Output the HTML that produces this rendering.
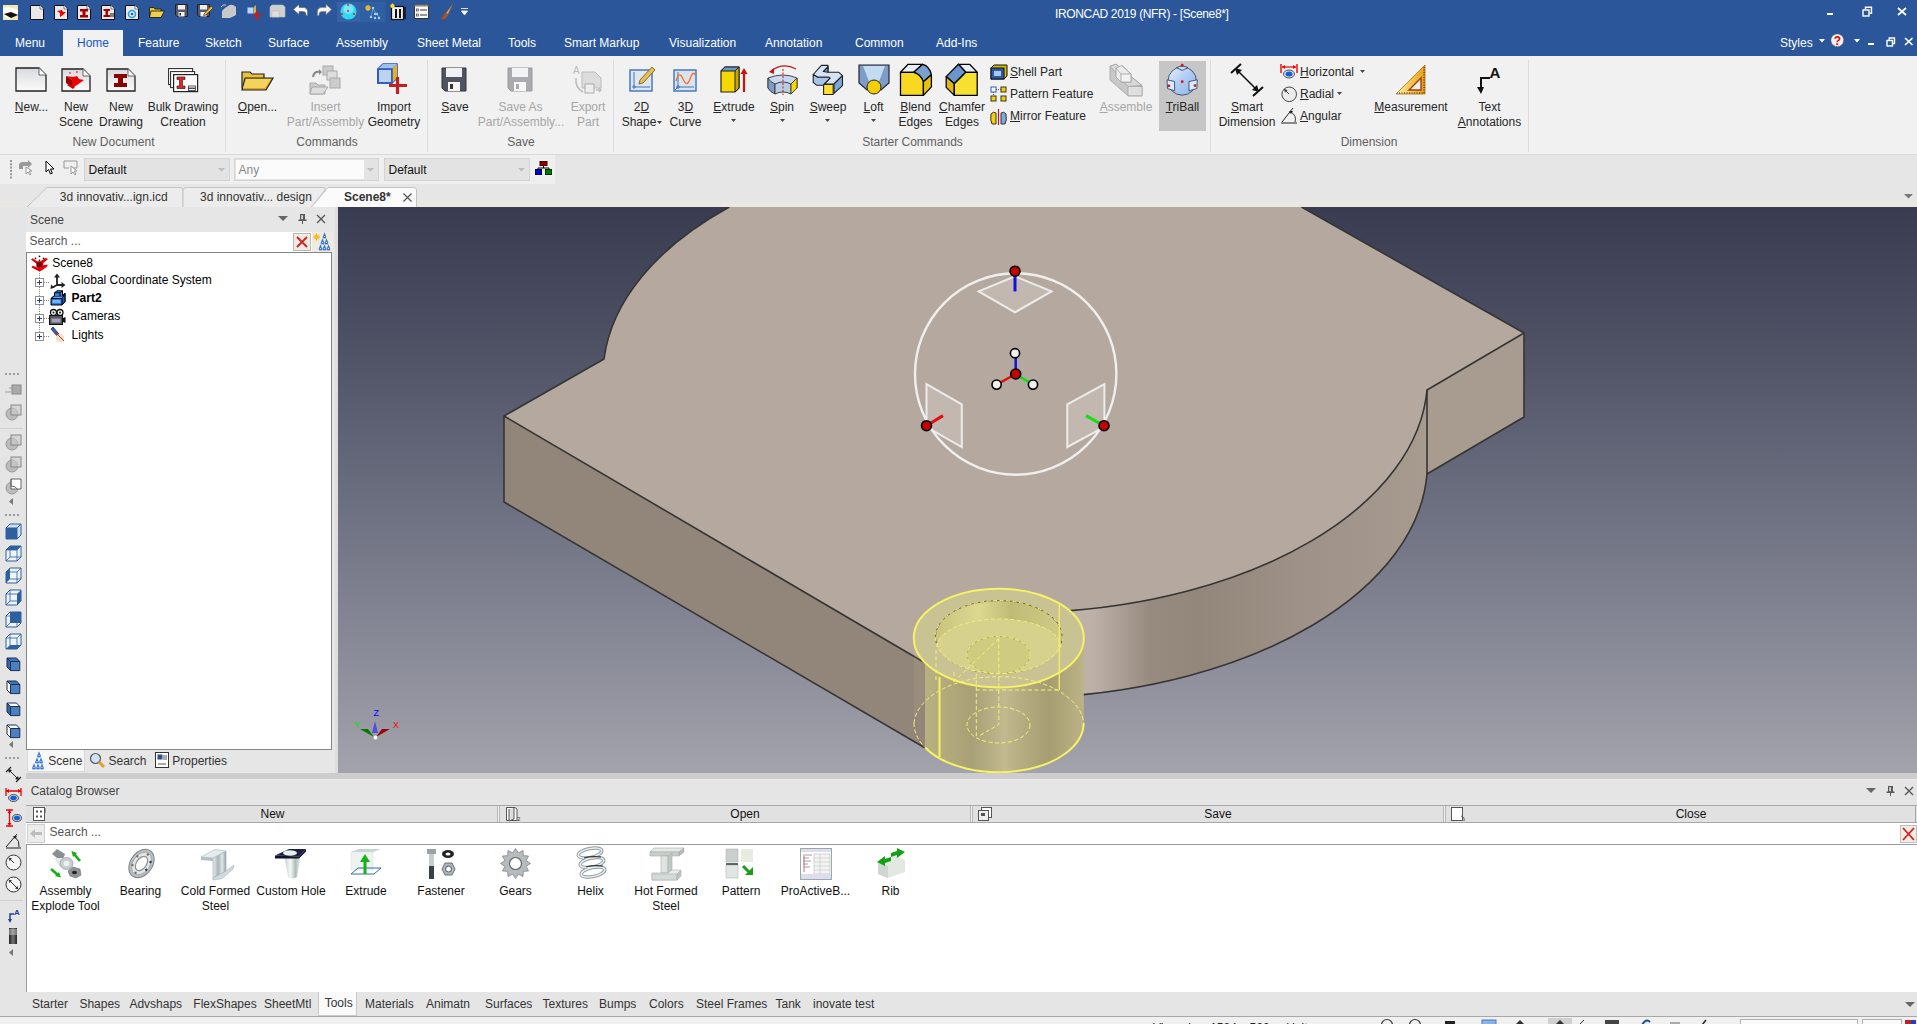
<!DOCTYPE html>
<html><head><meta charset="utf-8"><style>
html,body{margin:0;padding:0;}
body{width:1917px;height:1024px;position:relative;overflow:hidden;background:#e6e6e6;font-family:"Liberation Sans", sans-serif;}
svg{overflow:visible}
</style></head><body>
<div style="position:absolute;left:0px;top:0px;width:1917px;height:56px;background:#2b579a"></div>
<div style="position:absolute;left:1055px;top:7.84px;font-size:12px;line-height:12px;color:#ffffff;font-weight:normal;white-space:nowrap;letter-spacing:-0.35px">IRONCAD 2019 (NFR) - [Scene8*]</div>
<div style="position:absolute;left:1827px;top:13px;width:6px;height:2px;background:#fff"></div>
<svg style="position:absolute;left:1862px;top:6px;" width="11" height="11" viewBox="0 0 11 11"><rect x="1" y="4" width="6" height="6" fill="none" stroke="#fff" stroke-width="1.4"/><path d="M3.5 3.5V1.2H9.5V7.2H7.5" fill="none" stroke="#fff" stroke-width="1.4"/></svg>
<svg style="position:absolute;left:1897px;top:7px;" width="10" height="9" viewBox="0 0 10 9"><path d="M1 1L9 8M9 1L1 8" stroke="#fff" stroke-width="1.7"/></svg>
<div style="position:absolute;left:1780px;top:36.84px;font-size:12px;line-height:12px;color:#ffffff;font-weight:normal;white-space:nowrap;">Styles</div>
<svg style="position:absolute;left:1819px;top:39px;" width="6" height="4" viewBox="0 0 6 4"><path d="M0 0H6L3 3.5Z" fill="#fff"/></svg>
<svg style="position:absolute;left:1830px;top:33px;" width="15" height="15" viewBox="0 0 15 15"><circle cx="7.3" cy="7.2" r="6.3" fill="#f2f2f2" stroke="#555" stroke-width="0.7" stroke-dasharray="1 1"/><text x="7.3" y="11.5" text-anchor="middle" font-size="12" font-weight="bold" fill="#e00000" font-family="Liberation Sans">?</text></svg>
<svg style="position:absolute;left:1854px;top:39px;" width="6" height="4" viewBox="0 0 6 4"><path d="M0 0H6L3 3.5Z" fill="#fff"/></svg>
<div style="position:absolute;left:1868px;top:42.5px;width:6px;height:2.5px;background:#fff"></div>
<svg style="position:absolute;left:1886px;top:37px;" width="10" height="10" viewBox="0 0 10 10"><rect x="1" y="3.5" width="5.5" height="5.5" fill="none" stroke="#fff" stroke-width="1.4"/><path d="M3.2 3V1H8.5V6.5H6.5" fill="none" stroke="#fff" stroke-width="1.4"/></svg>
<svg style="position:absolute;left:1904px;top:37px;" width="10" height="9" viewBox="0 0 10 9"><path d="M1 1L8.5 8M8.5 1L1 8" stroke="#fff" stroke-width="1.7"/></svg>
<div style="position:absolute;left:63px;top:30px;width:60px;height:26px;background:#f1f1f1"></div>
<div style="position:absolute;left:15px;top:36.84px;font-size:12px;line-height:12px;color:#ffffff;font-weight:normal;white-space:nowrap;">Menu</div>
<div style="position:absolute;left:77px;top:36.84px;font-size:12px;line-height:12px;color:#1a56c8;font-weight:normal;white-space:nowrap;">Home</div>
<div style="position:absolute;left:138px;top:36.84px;font-size:12px;line-height:12px;color:#ffffff;font-weight:normal;white-space:nowrap;">Feature</div>
<div style="position:absolute;left:205px;top:36.84px;font-size:12px;line-height:12px;color:#ffffff;font-weight:normal;white-space:nowrap;">Sketch</div>
<div style="position:absolute;left:268px;top:36.84px;font-size:12px;line-height:12px;color:#ffffff;font-weight:normal;white-space:nowrap;">Surface</div>
<div style="position:absolute;left:336px;top:36.84px;font-size:12px;line-height:12px;color:#ffffff;font-weight:normal;white-space:nowrap;">Assembly</div>
<div style="position:absolute;left:417px;top:36.84px;font-size:12px;line-height:12px;color:#ffffff;font-weight:normal;white-space:nowrap;">Sheet Metal</div>
<div style="position:absolute;left:508px;top:36.84px;font-size:12px;line-height:12px;color:#ffffff;font-weight:normal;white-space:nowrap;">Tools</div>
<div style="position:absolute;left:564px;top:36.84px;font-size:12px;line-height:12px;color:#ffffff;font-weight:normal;white-space:nowrap;">Smart Markup</div>
<div style="position:absolute;left:669px;top:36.84px;font-size:12px;line-height:12px;color:#ffffff;font-weight:normal;white-space:nowrap;">Visualization</div>
<div style="position:absolute;left:765px;top:36.84px;font-size:12px;line-height:12px;color:#ffffff;font-weight:normal;white-space:nowrap;">Annotation</div>
<div style="position:absolute;left:855px;top:36.84px;font-size:12px;line-height:12px;color:#ffffff;font-weight:normal;white-space:nowrap;">Common</div>
<div style="position:absolute;left:936px;top:36.84px;font-size:12px;line-height:12px;color:#ffffff;font-weight:normal;white-space:nowrap;">Add-Ins</div>
<svg style="position:absolute;left:3px;top:5px;" width="15" height="15" viewBox="0 0 15 15"><rect x="0" y="0" width="15" height="15" fill="#f0e8b0"/><path d="M0 3Q7 1 15 5V9Q7 6 0 9Z" fill="#fff"/><path d="M1 9L8 7L15 10L8 13Z" fill="#111"/><path d="M2 11L7 14" stroke="#fff" stroke-width="1.5"/></svg>
<svg style="position:absolute;left:30px;top:5px;" width="14" height="15" viewBox="0 0 14 15"><path d="M0.5 0.5H10L13.5 4V14.5H0.5Z" fill="#e8e8ea" stroke="#111"/><path d="M10 0.5V4H13.5" fill="#fff" stroke="#333" stroke-width="0.6"/></svg>
<svg style="position:absolute;left:54px;top:5px;" width="14" height="15" viewBox="0 0 14 15"><path d="M0.5 0.5H10L13.5 4V14.5H0.5Z" fill="#e8e8ea" stroke="#111"/><path d="M10 0.5V4H13.5" fill="#fff" stroke="#333" stroke-width="0.6"/><path d="M3 6L6 8V12L9 10L12 7H9L8 5Z" fill="#e00"/></svg>
<svg style="position:absolute;left:77px;top:5px;" width="14" height="15" viewBox="0 0 14 15"><path d="M0.5 0.5H10L13.5 4V14.5H0.5Z" fill="#e8e8ea" stroke="#111"/><path d="M10 0.5V4H13.5" fill="#fff" stroke="#333" stroke-width="0.6"/><path d="M3 4H11V6.5H8.5V10H11V12.5H3V10H5.5V6.5H3Z" fill="#a00"/></svg>
<svg style="position:absolute;left:101px;top:5px;" width="14" height="15" viewBox="0 0 14 15"><path d="M0.5 0.5H10L13.5 4V14.5H0.5Z" fill="#e8e8ea" stroke="#111"/><path d="M10 0.5V4H13.5" fill="#fff" stroke="#333" stroke-width="0.6"/><path d="M2.5 4H9V6H7V10H9V12H2.5V10H4.5V6H2.5Z" fill="#a00"/><path d="M9 9H13M9 11H13" stroke="#111"/></svg>
<svg style="position:absolute;left:125px;top:5px;" width="14" height="15" viewBox="0 0 14 15"><path d="M0.5 0.5H10L13.5 4V14.5H0.5Z" fill="#e8e8ea" stroke="#111"/><path d="M10 0.5V4H13.5" fill="#fff" stroke="#333" stroke-width="0.6"/><circle cx="7" cy="9" r="3.5" fill="none" stroke="#29a0e0" stroke-width="1.5"/><circle cx="7" cy="9" r="1.3" fill="#1060c0"/></svg>
<svg style="position:absolute;left:149px;top:6px;" width="16" height="12" viewBox="0 0 16 12"><path d="M0.5 1.5H5L6 3H12V11H0.5Z" fill="#e8c23a" stroke="#111" stroke-width="0.8"/><path d="M2 5H15.5L12 11.5H0.5Z" fill="#f0d050" stroke="#111" stroke-width="0.8"/></svg>
<svg style="position:absolute;left:175px;top:4px;" width="13" height="13" viewBox="0 0 13 13"><path d="M0.5 0.5H12.5V12.5H2L0.5 11Z" fill="#555a66" stroke="#222"/><rect x="3" y="1" width="7" height="4.5" fill="#eee"/><rect x="3.5" y="8" width="6" height="4.5" fill="#f4f4f4"/><rect x="4.5" y="9" width="1.5" height="2.5" fill="#222"/></svg>
<svg style="position:absolute;left:197px;top:4px;" width="16" height="13" viewBox="0 0 16 13"><path d="M0.5 0.5H12.5V12.5H2L0.5 11Z" fill="#555a66" stroke="#222"/><rect x="3" y="1" width="7" height="4.5" fill="#eee"/><rect x="3.5" y="8" width="6" height="4.5" fill="#f4f4f4"/><path d="M7 10L14 2L16 4L9 11L6.5 11.5Z" fill="#f0b030" stroke="#333" stroke-width="0.6"/></svg>
<svg style="position:absolute;left:220px;top:3px;" width="17" height="16" viewBox="0 0 17 16"><path d="M8 3Q12 0 16 4V12L10 15H2V8Q4 5 8 3Z" fill="#c8c8c8"/><path d="M1 4Q3 1 6 2" stroke="#ccc" fill="none"/></svg>
<svg style="position:absolute;left:246px;top:4px;" width="16" height="16" viewBox="0 0 16 16"><rect x="1" y="3" width="7" height="7" fill="#b8d8f0" stroke="#2a55c0"/><path d="M8 3L10 1V8L8 10Z" fill="#e8b020"/><path d="M11 7V16M6.5 11.5H15.5" stroke="#c02020" stroke-width="2"/></svg>
<svg style="position:absolute;left:269px;top:3px;" width="17" height="16" viewBox="0 0 17 16"><path d="M1 4L3 2H14L16 4V14H1Z" fill="#d0d0d0" stroke="#bbb" stroke-width="0.6"/><rect x="3" y="8" width="7" height="6" fill="#e0e0e0" stroke="#bbb" stroke-width="0.6"/></svg>
<svg style="position:absolute;left:293px;top:4px;" width="15" height="12" viewBox="0 0 15 12"><path d="M6 0.5L0.5 5.5L6 10.5V7.5H10Q13 7.5 13 10.5V11.5H14.5V8Q14.5 3.5 10 3.5H6Z" fill="#fff" stroke="#666" stroke-width="0.6"/></svg>
<svg style="position:absolute;left:317px;top:4px;" width="15" height="12" viewBox="0 0 15 12"><path d="M9 0.5L14.5 5.5L9 10.5V7.5H5Q2 7.5 2 10.5V11.5H0.5V8Q0.5 3.5 5 3.5H9Z" fill="#f8f4e8" stroke="#888" stroke-width="0.6"/></svg>
<div style="position:absolute;left:337px;top:2px;width:23px;height:20px;background:#3563a8"></div>
<svg style="position:absolute;left:340px;top:3px;" width="17" height="17" viewBox="0 0 17 17"><circle cx="8.5" cy="8.5" r="8" fill="#30d8f0"/><circle cx="8.5" cy="6" r="5" fill="#a8f0ff" fill-opacity="0.6"/><circle cx="8" cy="2" r="1" fill="#e02020"/><circle cx="8" cy="8" r="1" fill="#e02020"/><circle cx="2" cy="11" r="1" fill="#e02020"/><circle cx="14" cy="11" r="1" fill="#e02020"/></svg>
<div style="position:absolute;left:360px;top:2px;width:25px;height:20px;background:#3060a4"></div>
<svg style="position:absolute;left:363px;top:4px;" width="19" height="16" viewBox="0 0 19 16"><path d="M2 4H8M5 1V7M3 2L7 6M7 2L3 6" stroke="#f0c020" stroke-width="1.2"/><g fill="#a8d0f0"><circle cx="10" cy="4" r="1.2"/><circle cx="12" cy="10" r="1.2"/><circle cx="8" cy="13" r="1.2"/><circle cx="12" cy="14" r="1.2"/><circle cx="16" cy="14" r="1.2"/><circle cx="14" cy="10" r="1.2"/></g><path d="M10 5L8 12M10 5L16 13" stroke="#8fc0e8" stroke-width="0.6"/></svg>
<svg style="position:absolute;left:389px;top:3px;" width="17" height="17" viewBox="0 0 17 17"><rect x="2.5" y="3.5" width="12" height="13" fill="#f0f0f0" stroke="#111" stroke-width="1.2"/><path d="M7 6V15M11 6V15" stroke="#111" stroke-width="2"/><path d="M16 4V16" stroke="#111" stroke-width="1.5"/><path d="M1 3H6M3.5 0.5V5.5M2 1.5L5 4.5M5 1.5L2 4.5" stroke="#f8d040" stroke-width="1.2"/></svg>
<svg style="position:absolute;left:414px;top:4px;" width="15" height="15" viewBox="0 0 15 15"><rect x="0.5" y="0.5" width="14" height="14" fill="#fafafa" stroke="#333"/><rect x="0.5" y="0.5" width="14" height="2" fill="#888"/><rect x="2.5" y="5" width="2" height="2" fill="none" stroke="#444" stroke-width="0.7"/><rect x="2.5" y="10" width="2" height="2" fill="none" stroke="#444" stroke-width="0.7"/><path d="M6 6H13M6 11H13" stroke="#333"/></svg>
<svg style="position:absolute;left:440px;top:3px;" width="14" height="17" viewBox="0 0 14 17"><path d="M13 0.5L6 10L8 11.5Z" fill="#e0b070" stroke="#7a5020" stroke-width="0.5"/><path d="M5 10L8 12L6 15Q3 17 1 16Q3 14 4 12Z" fill="#c05010"/></svg>
<svg style="position:absolute;left:461px;top:8px;" width="7" height="8" viewBox="0 0 7 8"><path d="M0 0.5H7M0.5 3H6.5L3.5 7Z" fill="#fff" stroke="#fff" stroke-width="0.8"/></svg>
<div style="position:absolute;left:0px;top:56px;width:1917px;height:98px;background:#f1f1f1"></div>
<div style="position:absolute;left:0px;top:154px;width:1917px;height:1px;background:#d9d9d9"></div>
<div style="position:absolute;left:225px;top:60px;width:1px;height:92px;background:#dcdcdc"></div>
<div style="position:absolute;left:427px;top:60px;width:1px;height:92px;background:#dcdcdc"></div>
<div style="position:absolute;left:613px;top:60px;width:1px;height:92px;background:#dcdcdc"></div>
<div style="position:absolute;left:1210px;top:60px;width:1px;height:92px;background:#dcdcdc"></div>
<div style="position:absolute;left:1528px;top:60px;width:1px;height:92px;background:#dcdcdc"></div>
<div style="position:absolute;left:31.5px;top:100.84px;font-size:12px;line-height:12px;color:#262626;font-weight:normal;white-space:nowrap;transform:translateX(-50%);"><u>N</u>ew...</div>
<div style="position:absolute;left:76px;top:100.84px;font-size:12px;line-height:12px;color:#262626;font-weight:normal;white-space:nowrap;transform:translateX(-50%);">New</div>
<div style="position:absolute;left:76px;top:115.84px;font-size:12px;line-height:12px;color:#262626;font-weight:normal;white-space:nowrap;transform:translateX(-50%);">Scene</div>
<div style="position:absolute;left:121px;top:100.84px;font-size:12px;line-height:12px;color:#262626;font-weight:normal;white-space:nowrap;transform:translateX(-50%);">New</div>
<div style="position:absolute;left:121px;top:115.84px;font-size:12px;line-height:12px;color:#262626;font-weight:normal;white-space:nowrap;transform:translateX(-50%);">Drawing</div>
<div style="position:absolute;left:183px;top:100.84px;font-size:12px;line-height:12px;color:#262626;font-weight:normal;white-space:nowrap;transform:translateX(-50%);">Bulk Drawing</div>
<div style="position:absolute;left:183px;top:115.84px;font-size:12px;line-height:12px;color:#262626;font-weight:normal;white-space:nowrap;transform:translateX(-50%);">Creation</div>
<div style="position:absolute;left:113.5px;top:135.84px;font-size:12px;line-height:12px;color:#606060;font-weight:normal;white-space:nowrap;transform:translateX(-50%);">New Document</div>
<div style="position:absolute;left:257.5px;top:100.84px;font-size:12px;line-height:12px;color:#262626;font-weight:normal;white-space:nowrap;transform:translateX(-50%);"><u>O</u>pen...</div>
<div style="position:absolute;left:325.5px;top:100.84px;font-size:12px;line-height:12px;color:#a6a6a6;font-weight:normal;white-space:nowrap;transform:translateX(-50%);">Insert</div>
<div style="position:absolute;left:325.5px;top:115.84px;font-size:12px;line-height:12px;color:#a6a6a6;font-weight:normal;white-space:nowrap;transform:translateX(-50%);">Part/Assembly</div>
<div style="position:absolute;left:394px;top:100.84px;font-size:12px;line-height:12px;color:#262626;font-weight:normal;white-space:nowrap;transform:translateX(-50%);">Import</div>
<div style="position:absolute;left:394px;top:115.84px;font-size:12px;line-height:12px;color:#262626;font-weight:normal;white-space:nowrap;transform:translateX(-50%);">Geometry</div>
<div style="position:absolute;left:327px;top:135.84px;font-size:12px;line-height:12px;color:#606060;font-weight:normal;white-space:nowrap;transform:translateX(-50%);">Commands</div>
<div style="position:absolute;left:455px;top:100.84px;font-size:12px;line-height:12px;color:#262626;font-weight:normal;white-space:nowrap;transform:translateX(-50%);"><u>S</u>ave</div>
<div style="position:absolute;left:520.5px;top:100.84px;font-size:12px;line-height:12px;color:#a6a6a6;font-weight:normal;white-space:nowrap;transform:translateX(-50%);">Save As</div>
<div style="position:absolute;left:521px;top:115.84px;font-size:12px;line-height:12px;color:#a6a6a6;font-weight:normal;white-space:nowrap;transform:translateX(-50%);">Part/Assembly...</div>
<div style="position:absolute;left:588px;top:100.84px;font-size:12px;line-height:12px;color:#a6a6a6;font-weight:normal;white-space:nowrap;transform:translateX(-50%);">Export</div>
<div style="position:absolute;left:588px;top:115.84px;font-size:12px;line-height:12px;color:#a6a6a6;font-weight:normal;white-space:nowrap;transform:translateX(-50%);">Part</div>
<div style="position:absolute;left:521px;top:135.84px;font-size:12px;line-height:12px;color:#606060;font-weight:normal;white-space:nowrap;transform:translateX(-50%);">Save</div>
<div style="position:absolute;left:641.5px;top:100.84px;font-size:12px;line-height:12px;color:#262626;font-weight:normal;white-space:nowrap;transform:translateX(-50%);">2<u>D</u></div>
<div style="position:absolute;left:639px;top:115.84px;font-size:12px;line-height:12px;color:#262626;font-weight:normal;white-space:nowrap;transform:translateX(-50%);">Shape</div>
<svg style="position:absolute;left:657px;top:121px;" width="5" height="3" viewBox="0 0 5 3"><path d="M0 0H5L2.5 3Z" fill="#444"/></svg>
<div style="position:absolute;left:685.5px;top:100.84px;font-size:12px;line-height:12px;color:#262626;font-weight:normal;white-space:nowrap;transform:translateX(-50%);">3<u>D</u></div>
<div style="position:absolute;left:685.5px;top:115.84px;font-size:12px;line-height:12px;color:#262626;font-weight:normal;white-space:nowrap;transform:translateX(-50%);">Curve</div>
<div style="position:absolute;left:734px;top:100.84px;font-size:12px;line-height:12px;color:#262626;font-weight:normal;white-space:nowrap;transform:translateX(-50%);"><u>E</u>xtrude</div>
<svg style="position:absolute;left:731px;top:119px;" width="5" height="3" viewBox="0 0 5 3"><path d="M0 0H5L2.5 3Z" fill="#444"/></svg>
<div style="position:absolute;left:782px;top:100.84px;font-size:12px;line-height:12px;color:#262626;font-weight:normal;white-space:nowrap;transform:translateX(-50%);"><u>S</u>pin</div>
<svg style="position:absolute;left:780px;top:119px;" width="5" height="3" viewBox="0 0 5 3"><path d="M0 0H5L2.5 3Z" fill="#444"/></svg>
<div style="position:absolute;left:828px;top:100.84px;font-size:12px;line-height:12px;color:#262626;font-weight:normal;white-space:nowrap;transform:translateX(-50%);"><u>S</u>weep</div>
<svg style="position:absolute;left:825px;top:119px;" width="5" height="3" viewBox="0 0 5 3"><path d="M0 0H5L2.5 3Z" fill="#444"/></svg>
<div style="position:absolute;left:873.6px;top:100.84px;font-size:12px;line-height:12px;color:#262626;font-weight:normal;white-space:nowrap;transform:translateX(-50%);"><u>L</u>oft</div>
<svg style="position:absolute;left:871px;top:119px;" width="5" height="3" viewBox="0 0 5 3"><path d="M0 0H5L2.5 3Z" fill="#444"/></svg>
<div style="position:absolute;left:915.5px;top:100.84px;font-size:12px;line-height:12px;color:#262626;font-weight:normal;white-space:nowrap;transform:translateX(-50%);"><u>B</u>lend</div>
<div style="position:absolute;left:915.5px;top:115.84px;font-size:12px;line-height:12px;color:#262626;font-weight:normal;white-space:nowrap;transform:translateX(-50%);">Edges</div>
<div style="position:absolute;left:962px;top:100.84px;font-size:12px;line-height:12px;color:#262626;font-weight:normal;white-space:nowrap;transform:translateX(-50%);"><u>C</u>hamfer</div>
<div style="position:absolute;left:962px;top:115.84px;font-size:12px;line-height:12px;color:#262626;font-weight:normal;white-space:nowrap;transform:translateX(-50%);">Edges</div>
<div style="position:absolute;left:1010px;top:65.84px;font-size:12px;line-height:12px;color:#262626;font-weight:normal;white-space:nowrap;"><u>S</u>hell Part</div>
<div style="position:absolute;left:1010px;top:87.84px;font-size:12px;line-height:12px;color:#262626;font-weight:normal;white-space:nowrap;">Pattern Feature</div>
<div style="position:absolute;left:1010px;top:109.84px;font-size:12px;line-height:12px;color:#262626;font-weight:normal;white-space:nowrap;"><u>M</u>irror Feature</div>
<div style="position:absolute;left:1126px;top:100.84px;font-size:12px;line-height:12px;color:#a6a6a6;font-weight:normal;white-space:nowrap;transform:translateX(-50%);"><u>A</u>ssemble</div>
<div style="position:absolute;left:1159px;top:61px;width:47px;height:70px;background:#c6c6c6"></div>
<div style="position:absolute;left:1182.5px;top:100.84px;font-size:12px;line-height:12px;color:#262626;font-weight:normal;white-space:nowrap;transform:translateX(-50%);"><u>T</u>riBall</div>
<div style="position:absolute;left:912.5px;top:135.84px;font-size:12px;line-height:12px;color:#606060;font-weight:normal;white-space:nowrap;transform:translateX(-50%);">Starter Commands</div>
<div style="position:absolute;left:1247px;top:100.84px;font-size:12px;line-height:12px;color:#262626;font-weight:normal;white-space:nowrap;transform:translateX(-50%);"><u>S</u>mart</div>
<div style="position:absolute;left:1247px;top:115.84px;font-size:12px;line-height:12px;color:#262626;font-weight:normal;white-space:nowrap;transform:translateX(-50%);">Dimension</div>
<div style="position:absolute;left:1300px;top:65.84px;font-size:12px;line-height:12px;color:#262626;font-weight:normal;white-space:nowrap;"><u>H</u>orizontal</div>
<svg style="position:absolute;left:1360px;top:70px;" width="5" height="3" viewBox="0 0 5 3"><path d="M0 0H5L2.5 3Z" fill="#444"/></svg>
<div style="position:absolute;left:1300px;top:87.84px;font-size:12px;line-height:12px;color:#262626;font-weight:normal;white-space:nowrap;"><u>R</u>adial</div>
<svg style="position:absolute;left:1337px;top:92px;" width="5" height="3" viewBox="0 0 5 3"><path d="M0 0H5L2.5 3Z" fill="#444"/></svg>
<div style="position:absolute;left:1300px;top:109.84px;font-size:12px;line-height:12px;color:#262626;font-weight:normal;white-space:nowrap;"><u>A</u>ngular</div>
<div style="position:absolute;left:1411px;top:100.84px;font-size:12px;line-height:12px;color:#262626;font-weight:normal;white-space:nowrap;transform:translateX(-50%);"><u>M</u>easurement</div>
<div style="position:absolute;left:1489.5px;top:100.84px;font-size:12px;line-height:12px;color:#262626;font-weight:normal;white-space:nowrap;transform:translateX(-50%);">Text</div>
<div style="position:absolute;left:1489.5px;top:115.84px;font-size:12px;line-height:12px;color:#262626;font-weight:normal;white-space:nowrap;transform:translateX(-50%);"><u>A</u>nnotations</div>
<div style="position:absolute;left:1369px;top:135.84px;font-size:12px;line-height:12px;color:#606060;font-weight:normal;white-space:nowrap;transform:translateX(-50%);">Dimension</div>
<svg style="position:absolute;left:15px;top:67px;" width="32" height="25" viewBox="0 0 32 25"><defs><linearGradient id="pg15" x1="0" y1="0" x2="0" y2="1"><stop offset="0" stop-color="#d8dade"/><stop offset="1" stop-color="#fbfbfb"/></linearGradient></defs>
<path d="M1 1H24L31 8V24H1Z" fill="url(#pg15)" stroke="#222" stroke-width="1.3"/>
<path d="M24 1V8H31" fill="#fff" stroke="#444" stroke-width="0.8"/></svg>
<svg style="position:absolute;left:61px;top:68px;" width="30" height="24" viewBox="0 0 30 24"><defs><linearGradient id="pg61" x1="0" y1="0" x2="0" y2="1"><stop offset="0" stop-color="#d8dade"/><stop offset="1" stop-color="#fbfbfb"/></linearGradient></defs>
<path d="M1 1H22L29 8V23H1Z" fill="url(#pg61)" stroke="#222" stroke-width="1.3"/>
<path d="M22 1V8H29" fill="#fff" stroke="#444" stroke-width="0.8"/><path d="M5 8L11 12L11 20L16 17L23 12L18 11L16 8L12 9Z" fill="#e00"/><path d="M5 8L11 12V19L5 15Z" fill="#900"/><path d="M6 17L12 21L14 19L8 16Z" fill="#c00"/><circle cx="9" cy="5" r="0.8" fill="#c00"/><circle cx="16" cy="4" r="0.8" fill="#c00"/></svg>
<svg style="position:absolute;left:106px;top:68px;" width="30" height="24" viewBox="0 0 30 24"><defs><linearGradient id="pg106" x1="0" y1="0" x2="0" y2="1"><stop offset="0" stop-color="#d8dade"/><stop offset="1" stop-color="#fbfbfb"/></linearGradient></defs>
<path d="M1 1H22L29 8V23H1Z" fill="url(#pg106)" stroke="#222" stroke-width="1.3"/>
<path d="M22 1V8H29" fill="#fff" stroke="#444" stroke-width="0.8"/><path d="M8 6H21V10H17V15H21V19H8V15H12V10H8Z" fill="#8b0000"/></svg>
<svg style="position:absolute;left:168px;top:68px;" width="31" height="24" viewBox="0 0 31 24"><rect x="0.6" y="0.6" width="24" height="16" fill="#fff" stroke="#222"/><rect x="2.6" y="3.6" width="24" height="16" fill="#fff" stroke="#222"/><rect x="5.6" y="6.6" width="24" height="17" fill="#fff" stroke="#222" stroke-width="1.2"/>
<path d="M9 9H17V11.5H14.5V18H17V20.5H9V18H11.5V11.5H9Z" fill="#e22" stroke="#222" stroke-width="0.7"/><rect x="20.5" y="18" width="7" height="2" fill="none" stroke="#333" stroke-width="0.8"/><rect x="20.5" y="20.5" width="7" height="2" fill="none" stroke="#333" stroke-width="0.8"/></svg>
<svg style="position:absolute;left:241px;top:69px;" width="33" height="22" viewBox="0 0 33 22"><path d="M1 3H9L11 5H23V19H1Z" fill="#e8c23a" stroke="#222" stroke-width="1.2"/><path d="M4 9H32L25 21H1Z" fill="#d9a928" stroke="#222" stroke-width="1.2"/><path d="M5 10H30L24 19H2Z" fill="#f3d35a"/></svg>
<svg style="position:absolute;left:309px;top:65px;" width="33" height="30" viewBox="0 0 33 30"><rect x="14" y="1" width="10" height="9" fill="#ccc" stroke="#aaa"/><rect x="18" y="6" width="10" height="9" fill="#ddd" stroke="#aaa"/><rect x="21" y="13" width="10" height="10" fill="#ccc" stroke="#aaa"/><path d="M4 12Q5 6 11 7" fill="none" stroke="#888" stroke-width="2"/><path d="M10 4L13 7L10 10Z" fill="#888"/><path d="M1 18H7L9 20H16V29H1Z" fill="#ccc" stroke="#aaa"/><path d="M3 22H19L14 29H1Z" fill="#ddd" stroke="#aaa"/></svg>
<svg style="position:absolute;left:377px;top:63px;" width="33" height="32" viewBox="0 0 33 32"><path d="M1 6L6 1H20V15L15 20H1Z" fill="#bcd4f2" stroke="#2a55c0" stroke-width="1.6"/><path d="M15 6H1M15 6L20 1M15 6V20" fill="none" stroke="#2a55c0" stroke-width="1.4"/><path d="M15 6L20 1V15L15 20Z" fill="#e8b020"/><path d="M1 6L6 1H20L15 6Z" fill="#9fc0ea"/><path d="M1 6H15V20H1Z" fill="none" stroke="#2a55c0" stroke-width="1.5"/>
<path d="M20.5 14V31M12 22.5H30" stroke="#c02020" stroke-width="3.2"/></svg>
<svg style="position:absolute;left:441px;top:67px;" width="26" height="25" viewBox="0 0 26 25"><path d="M1 1H25V24H4L1 21Z" fill="#4f5560" stroke="#333"/><rect x="5" y="1" width="16" height="9" fill="#eef0f3"/><rect x="7" y="15" width="12" height="9" fill="#f4f4f4"/><rect x="9" y="17" width="3" height="5" fill="#333"/></svg>
<svg style="position:absolute;left:507px;top:67px;" width="26" height="25" viewBox="0 0 26 25"><path d="M1 1H25V24H4L1 21Z" fill="#a9abae" stroke="#999"/><rect x="5" y="1" width="16" height="9" fill="#f2f2f2"/><rect x="7" y="15" width="12" height="9" fill="#f6f6f6"/><rect x="9" y="17" width="3" height="5" fill="#aaa"/></svg>
<svg style="position:absolute;left:573px;top:64px;" width="30" height="31" viewBox="0 0 30 31"><text x="0" y="10" font-size="10" fill="#bbb" font-family="Liberation Sans">A</text><path d="M9 8H22L28 14V24H9Z" fill="#ddd" stroke="#bbb"/><path d="M3 14Q2 24 10 28" fill="none" stroke="#bbb" stroke-width="1.5"/><rect x="12" y="20" width="9" height="9" fill="#eee" stroke="#aaa"/><path d="M23 26H28M26 24L28 26L26 28" stroke="#bbb" stroke-width="1.3" fill="none"/></svg>
<svg style="position:absolute;left:629px;top:64px;" width="26" height="28" viewBox="0 0 26 28"><rect x="1" y="6" width="22" height="21" fill="#e0e6ee" stroke="#3b73c0" stroke-width="1.4"/><path d="M5 8V23H21" fill="none" stroke="#3b73c0" stroke-width="1"/><circle cx="5" cy="23" r="1.2" fill="none" stroke="#3b73c0"/><path d="M11 16L23 3L26 6L14 19L10 20Z" fill="#e8c050" stroke="#6a5020" stroke-width="0.8"/></svg>
<svg style="position:absolute;left:673px;top:69px;" width="25" height="23" viewBox="0 0 25 23"><rect x="1" y="1" width="22" height="21" fill="#dde3ec" stroke="#3b73c0" stroke-width="1.4"/><path d="M5 3V18H21M5 18L2 21" fill="none" stroke="#3b73c0" stroke-width="1"/><circle cx="5" cy="18" r="1.3" fill="none" stroke="#3b73c0"/><path d="M3 12Q6 1 10 10T17 10T22 6" fill="none" stroke="#f07020" stroke-width="1.3"/></svg>
<svg style="position:absolute;left:720px;top:66px;" width="28" height="28" viewBox="0 0 28 28"><path d="M1 5L5 1H19V22L15 26H1Z" fill="#f5d800" stroke="#222" stroke-width="1.2"/><path d="M1 5L5 1H19L15 5Z" fill="#6a98d0" stroke="#222" stroke-width="1"/><path d="M15 5L19 1V22L15 26Z" fill="#c8a800" stroke="#222" stroke-width="1"/><path d="M24 26V6" stroke="#d01010" stroke-width="2.2"/><path d="M20.5 8L24 2L27.5 8Z" fill="#d01010"/></svg>
<svg style="position:absolute;left:767px;top:64px;" width="32" height="31" viewBox="0 0 32 31"><path d="M4 7Q16 -2 29 5" fill="none" stroke="#c01818" stroke-width="1.3"/><path d="M2 8L7 4L7 10Z" fill="#c01818"/><path d="M1 14Q16 8 30 14V24Q16 19 1 24Z" fill="#c8d8ee" stroke="#333" stroke-width="0.9"/><path d="M1 14V24Q3 28 8 30V20Q3 18 1 14Z" fill="#7e9cc8" stroke="#333" stroke-width="0.9"/><path d="M8 20Q16 16 24 20V30Q16 26 8 30Z" fill="#b8cce6" stroke="#333" stroke-width="0.9"/><path d="M24 20L30 14V24L24 30Z" fill="#f5d800" stroke="#333" stroke-width="0.9"/><path d="M16 5V31" stroke="#c01818" stroke-width="1" stroke-dasharray="2 1.5"/></svg>
<svg style="position:absolute;left:808px;top:60px;" width="40" height="38" viewBox="0 0 40 38"><g stroke="#222" stroke-width="1.1" stroke-linejoin="round">
<path d="M5.2,14.5 L13.4,5.4 H20 V12.3 H30.8 L34.5,15.6 L26,24 H16.3 L22,18.2 L21,17.3 H9.6 Z" fill="#d4e4f6"/>
<path d="M5.2,14.5 L9.6,17.3 H21 L22,18.2 L16.3,24 V25.2 H8.5 L5.2,22.3 Z" fill="#a8c4ea"/>
<path d="M34.5,15.6 V25.6 L26,33.4 V24 Z" fill="#7ea6dc"/>
<path d="M15.3,11.5 L20,6.7 V12.3 Z" fill="#6f96cc"/>
<rect x="15.6" y="24.5" width="9.6" height="10" fill="#ffe030"/></g></svg>
<svg style="position:absolute;left:858px;top:64px;" width="32" height="31" viewBox="0 0 32 31"><path d="M1 1H31V19L23 26H9L1 19Z" fill="#7e9cc8" stroke="#223" stroke-width="1.2"/><path d="M5 2H27L20 20H12Z" fill="#c4dcf2"/><circle cx="16" cy="23" r="7" fill="#f5d000" stroke="#223" stroke-width="1"/></svg>
<svg style="position:absolute;left:896px;top:60px;" width="86" height="38" viewBox="0 0 86 38"><g stroke="#000" stroke-width="1.3" stroke-linejoin="round">
<path d="M4.5,12.3 L12.1,4.3 H26.7 L17.7,12.3 Z" fill="#e8eef8"/>
<path d="M17.7,12.3 L26.7,4.3 Q33.5,6 35.4,14.8 L27.4,21.8 Q24.5,14 17.7,12.3 Z" fill="#7aa0d0"/>
<path d="M4.5,12.3 H17.7 Q24.5,14 27.4,21.8 V35.4 H4.5 Z" fill="#f8d820"/>
<path d="M27.4,21.8 L35.4,14.8 V26.9 L27.4,35.4 Z" fill="#e8c010"/>
<path d="M62.4,4.3 H73.6 L81.2,12.3 H69.8 Z" fill="#e8eef8"/>
<path d="M62.4,4.3 L69.8,12.3 L58.3,23.8 L50.2,16.6 Z" fill="#6a96cc"/>
<path d="M50.2,16.6 L58.3,23.8 V35.4 L50.2,27.4 Z" fill="#e0b810"/>
<path d="M58.3,23.8 L69.8,12.3 H81.2 V35.4 H58.3 Z" fill="#f8e030"/></g></svg>
<svg style="position:absolute;left:990px;top:64px;" width="18" height="16" viewBox="0 0 18 16"><path d="M1 4L4 1H17V12L14 15H1Z" fill="#d8b800" stroke="#111"/><rect x="1" y="4" width="13" height="11" fill="#2a5aa8" stroke="#111"/><rect x="4" y="7" width="7" height="5" fill="#a8c8f0"/></svg>
<svg style="position:absolute;left:990px;top:86px;" width="18" height="16" viewBox="0 0 18 16"><rect x="1" y="1" width="5" height="5" fill="#fff" stroke="#2a5ad0"/><rect x="11" y="1" width="5" height="5" fill="#f5d000" stroke="#333"/><rect x="1" y="10" width="5" height="5" fill="#f5d000" stroke="#333"/><rect x="11" y="10" width="5" height="5" fill="#f5d000" stroke="#333"/><path d="M6 3.5H11M3.5 6V10" stroke="#555" stroke-dasharray="1 1"/></svg>
<svg style="position:absolute;left:990px;top:109px;" width="17" height="16" viewBox="0 0 17 16"><path d="M1 5Q3 2 6 4V15H2Q0 12 1 5Z" fill="#f5d000" stroke="#333"/><path d="M16 5Q14 2 11 4V15H15Q17 12 16 5Z" fill="#7aaae0" stroke="#333"/><path d="M8.5 0V16" stroke="#d01010" stroke-width="1.2"/></svg>
<svg style="position:absolute;left:1105px;top:60px;" width="40" height="40" viewBox="0 0 40 40"><g stroke="#a6a6a6" stroke-width="0.9" stroke-linejoin="round">
<path d="M5,6.3 L11,4.2 L37,25.5 V35.8 H23 L5,20 Z" fill="#c8c8c8"/>
<path d="M5,6.3 L11,4.2 L37,25.5 L23,26.5 Z" fill="#d8d8d8"/>
<rect x="23" y="26.5" width="14" height="9.3" fill="#e4e4e4"/>
<path d="M11,8 L17,5.5 L26,14 V22 H16 L11,17 Z" fill="#ececec"/>
<rect x="16" y="14" width="10" height="8" fill="#f2f2f2"/>
<path d="M11,8 L16,14 M17,5.5 L26,14" fill="none"/></g>
<path d="M25 29H37M25 32H37M27 26.5V35.8M31 26.5V35.8M34 26.5V35.8" stroke="#d0d0d0" stroke-width="0.5"/></svg>
<svg style="position:absolute;left:1164px;top:62px;" width="36" height="36" viewBox="0 0 36 36"><defs><linearGradient id="tbg" x1="0" y1="0" x2="1" y2="1"><stop offset="0" stop-color="#e8f2ff"/><stop offset="0.5" stop-color="#aecbf2"/><stop offset="1" stop-color="#8fb4e8"/></linearGradient></defs>
<circle cx="18.2" cy="19" r="14.2" fill="url(#tbg)" stroke="#3a4a6a" stroke-width="0.9"/>
<path d="M12.5,5.8 L18.2,8.4 L24,5.8 Q18.2,2.5 12.5,5.8Z" fill="#c0dcff" stroke="#3a4a6a" stroke-width="0.9"/>
<path d="M3,17.8 L10.6,19.5 V28.8 L3.5,26.5 Z" fill="#d8ecff" stroke="#3a4a6a" stroke-width="0.9"/>
<path d="M33.3,17.8 L25,19.5 V28.8 L32.8,26.5 Z" fill="#d8ecff" stroke="#3a4a6a" stroke-width="0.9"/>
<circle cx="18.2" cy="3.2" r="1.4" fill="#e01010"/><circle cx="18.2" cy="19.7" r="1.4" fill="#e01010"/><circle cx="4.9" cy="23.8" r="1.4" fill="#e01010"/><circle cx="31" cy="23.6" r="1.4" fill="#e01010"/></svg>
<svg style="position:absolute;left:1229px;top:63px;" width="36" height="34" viewBox="0 0 36 34"><path d="M2 10L12 1M24 33L34 24" stroke="#111" stroke-width="2"/><path d="M8 7L28 27" stroke="#111" stroke-width="1.6"/><path d="M6 5L13 7L8 12Z" fill="#111"/><path d="M30 29L23 27L28 22Z" fill="#111"/></svg>
<svg style="position:absolute;left:1280px;top:63px;" width="19" height="17" viewBox="0 0 19 17"><path d="M1 1V10M17 1V10" stroke="#e00" stroke-width="1.4"/><path d="M2 4H16" stroke="#e00" stroke-width="1.2"/><path d="M2 4L5 2V6ZM16 4L13 2V6Z" fill="#e00"/><ellipse cx="9" cy="11" rx="5.5" ry="4" fill="#ddd" stroke="#444" stroke-width="0.9"/><ellipse cx="9" cy="11" rx="3.5" ry="2.5" fill="#1060e0"/></svg>
<svg style="position:absolute;left:1281px;top:86px;" width="17" height="17" viewBox="0 0 17 17"><circle cx="8.2" cy="8.3" r="7.3" fill="#ececec" stroke="#333" stroke-width="0.9"/><path d="M3.5 3.5L8 8" stroke="#333" stroke-width="0.9"/><path d="M3 3L6.5 4L4 6.5Z" fill="#333"/></svg>
<svg style="position:absolute;left:1280px;top:107px;" width="18" height="17" viewBox="0 0 18 17"><path d="M1 16H17M2 15L13 1" stroke="#222" stroke-width="1"/><path d="M11 5Q17 9 15 15" fill="none" stroke="#222" stroke-width="0.9"/><path d="M9 4L13 4L11 7Z" fill="#222"/></svg>
<svg style="position:absolute;left:1395px;top:64px;" width="32" height="31" viewBox="0 0 32 31"><defs><linearGradient id="msg" x1="0" y1="0" x2="1" y2="0"><stop offset="0" stop-color="#fff0a0"/><stop offset="1" stop-color="#e8a010"/></linearGradient></defs><path d="M1 30L30 1V30Z" fill="url(#msg)" stroke="#b07010" stroke-width="0.8"/><path d="M14 26L26 14V26Z" fill="#f0f0f0" stroke="#a04010" stroke-width="1.4"/><path d="M29 3V29H2" fill="none" stroke="#222" stroke-width="1" stroke-dasharray="1 1.5"/></svg>
<svg style="position:absolute;left:1474px;top:64px;" width="31" height="31" viewBox="0 0 31 31"><text x="15.5" y="14" font-size="15" font-weight="bold" fill="#111" font-family="Liberation Sans">A</text><path d="M16 14H7V25" fill="none" stroke="#111" stroke-width="2"/><path d="M3 23L7 30L10 23Z" fill="#111"/></svg>
<div style="position:absolute;left:0px;top:155px;width:555px;height:29px;background:#efefef"></div>
<svg style="position:absolute;left:10px;top:160px;" width="3" height="18" viewBox="0 0 3 18"><rect x="0" y="0.0" width="2" height="2" fill="#999"/><rect x="0" y="3.3" width="2" height="2" fill="#999"/><rect x="0" y="6.6" width="2" height="2" fill="#999"/><rect x="0" y="9.9" width="2" height="2" fill="#999"/><rect x="0" y="13.2" width="2" height="2" fill="#999"/><rect x="0" y="16.5" width="2" height="2" fill="#999"/></svg>
<svg style="position:absolute;left:18px;top:160px;" width="18" height="15" viewBox="0 0 18 15"><path d="M1 9V5Q1 2 5 2H10V0L14 4L10 8V6H5V9Z" fill="#999"/><path d="M8 7V14L10 12L12 15L13 14L11 11H14Z" fill="#fff" stroke="#999"/></svg>
<svg style="position:absolute;left:45px;top:160px;" width="10" height="15" viewBox="0 0 10 15"><path d="M1 1V12L3.6 9.5L5.5 14L7.3 13.2L5.5 9H9Z" fill="#fff" stroke="#000" stroke-width="1"/></svg>
<svg style="position:absolute;left:63px;top:160px;" width="16" height="15" viewBox="0 0 16 15"><path d="M1 1H14V8H8" fill="none" stroke="#999"/><path d="M1 1V8H6" fill="none" stroke="#999"/><path d="M8 6V14L10 12L12 15L13 14L11 11H14Z" fill="#fff" stroke="#999"/></svg>
<div style="position:absolute;left:84px;top:158px;width:146px;height:23px;background:#e3e3e3;border:1px solid #d3d3d3;box-sizing:border-box"></div>
<div style="position:absolute;left:88.5px;top:163.84px;font-size:12px;line-height:12px;color:#111;font-weight:normal;white-space:nowrap;">Default</div>
<svg style="position:absolute;left:218px;top:168px;" width="7" height="4" viewBox="0 0 7 4"><path d="M0 0H7L3.5 3.5Z" fill="#bdbdbd"/></svg>
<div style="position:absolute;left:234px;top:158px;width:145px;height:23px;background:#e3e3e3;border:1px solid #d3d3d3;box-sizing:border-box"></div>
<div style="position:absolute;left:236px;top:160px;width:128px;height:19px;background:#fbfbfb"></div>
<div style="position:absolute;left:238.5px;top:163.84px;font-size:12px;line-height:12px;color:#8a8a8a;font-weight:normal;white-space:nowrap;">Any</div>
<svg style="position:absolute;left:367px;top:168px;" width="7" height="4" viewBox="0 0 7 4"><path d="M0 0H7L3.5 3.5Z" fill="#bdbdbd"/></svg>
<div style="position:absolute;left:384px;top:158px;width:146px;height:23px;background:#e3e3e3;border:1px solid #d3d3d3;box-sizing:border-box"></div>
<div style="position:absolute;left:388.5px;top:163.84px;font-size:12px;line-height:12px;color:#111;font-weight:normal;white-space:nowrap;">Default</div>
<svg style="position:absolute;left:518px;top:168px;" width="7" height="4" viewBox="0 0 7 4"><path d="M0 0H7L3.5 3.5Z" fill="#bdbdbd"/></svg>
<svg style="position:absolute;left:535px;top:161px;" width="17" height="14" viewBox="0 0 17 14"><rect x="5" y="0.5" width="7" height="4" fill="#8b0000" stroke="#400"/><path d="M8.5 4.5V7M3 9V7H14V9" fill="none" stroke="#000"/><rect x="0.5" y="8.5" width="6" height="5" fill="#0000e0" stroke="#003"/><rect x="10.5" y="8.5" width="6" height="5" fill="#007a00" stroke="#030"/></svg>
<div style="position:absolute;left:0px;top:184px;width:1917px;height:23px;background:#e6e6e6"></div>
<div style="position:absolute;left:0px;top:201px;width:1917px;height:6px;background:#e9e8e3"></div>
<svg style="position:absolute;left:26px;top:186px;" width="400" height="22" viewBox="0 0 400 22"><path d="M0.5 21.5L21 1.5H154Q156.5 1.5 157 4V21.5Z" fill="#ececec" stroke="#c4c4c4"/><path d="M157 21.5V4Q157.5 1.5 160 1.5H297Q300 1.5 299 4L285 21.5Z" fill="#ececec" stroke="#c4c4c4"/>
<path d="M285 21.5L302 1.5H388Q390.5 1.5 390.5 4V21.5Z" fill="#fbfbfb" stroke="#c4c4c4"/></svg>
<div style="position:absolute;left:59.8px;top:190.84px;font-size:12px;line-height:12px;color:#333;font-weight:normal;white-space:nowrap;">3d innovativ...ign.icd</div>
<div style="position:absolute;left:200px;top:190.84px;font-size:12px;line-height:12px;color:#333;font-weight:normal;white-space:nowrap;">3d innovativ... design</div>
<div style="position:absolute;left:344px;top:190.84px;font-size:12px;line-height:12px;color:#333;font-weight:bold;white-space:nowrap;">Scene8*</div>
<svg style="position:absolute;left:403px;top:193px;" width="9" height="9" viewBox="0 0 9 9"><path d="M0.5 0.5L8.5 8.5M8.5 0.5L0.5 8.5" stroke="#555" stroke-width="1.2"/></svg>
<svg style="position:absolute;left:1904px;top:194px;" width="9" height="5" viewBox="0 0 9 5"><path d="M0 0H9L4.5 4.5Z" fill="#777"/></svg>
<div style="position:absolute;left:0px;top:207px;width:26px;height:810px;background:#e5e5e5"></div>
<svg style="position:absolute;left:5px;top:373px;" width="15" height="3" viewBox="0 0 15 3"><rect x="0" y="0" width="2" height="2" fill="#9a9a9a"/><rect x="4" y="0" width="2" height="2" fill="#9a9a9a"/><rect x="8" y="0" width="2" height="2" fill="#9a9a9a"/><rect x="12" y="0" width="2" height="2" fill="#9a9a9a"/></svg>
<svg style="position:absolute;left:5px;top:383px;" width="17" height="17" viewBox="0 0 17 17"><rect x="7" y="2" width="9" height="9" fill="#aaa" stroke="#888"/><path d="M0 9H6M4 5L7 5" stroke="#999"/></svg>
<svg style="position:absolute;left:5px;top:404px;" width="17" height="17" viewBox="0 0 17 17"><circle cx="7" cy="10" r="6" fill="#bbb" stroke="#999"/><rect x="6" y="1" width="10" height="10" fill="#ccc" stroke="#888" fill-opacity="0.6"/></svg>
<div style="position:absolute;left:0px;top:428px;width:23px;height:1px;background:#d0d0d0"></div>
<svg style="position:absolute;left:5px;top:434px;" width="17" height="17" viewBox="0 0 17 17"><circle cx="7" cy="10" r="6" fill="#bbb" stroke="#999"/><rect x="6" y="1" width="10" height="10" fill="#ccc" stroke="#888" fill-opacity="0.6"/></svg>
<svg style="position:absolute;left:5px;top:456px;" width="17" height="17" viewBox="0 0 17 17"><circle cx="7" cy="10" r="6" fill="#bbb" stroke="#999"/><rect x="6" y="1" width="10" height="10" fill="#ccc" stroke="#888" fill-opacity="0.6"/></svg>
<svg style="position:absolute;left:5px;top:478px;" width="17" height="17" viewBox="0 0 17 17"><circle cx="7" cy="10" r="6" fill="#bbb" stroke="#999"/><path d="M6 1H16V11H6Z" fill="#fff" stroke="#666"/><path d="M6 1V8Q11 8 12 11" fill="none" stroke="#666"/></svg>
<svg style="position:absolute;left:9px;top:498px;" width="4" height="7" viewBox="0 0 4 7"><path d="M4 0V7L0 3.5Z" fill="#777"/></svg>
<svg style="position:absolute;left:5px;top:514px;" width="15" height="3" viewBox="0 0 15 3"><rect x="0" y="0" width="2" height="2" fill="#9a9a9a"/><rect x="4" y="0" width="2" height="2" fill="#9a9a9a"/><rect x="8" y="0" width="2" height="2" fill="#9a9a9a"/><rect x="12" y="0" width="2" height="2" fill="#9a9a9a"/></svg>
<svg style="position:absolute;left:5px;top:523px;" width="17" height="17" viewBox="0 0 17 17"><path d="M1 5L5 1H16V12L12 16H1Z" fill="#cfe0f4" stroke="#2f5f9f"/><rect x="1" y="5" width="11" height="11" fill="#2f5f9f"/><path d="M1 5H12L16 1M12 5V16" stroke="#2f5f9f" fill="none"/></svg>
<svg style="position:absolute;left:5px;top:545px;" width="17" height="17" viewBox="0 0 17 17"><path d="M1 5L5 1H16V12L12 16H1Z" fill="#eef4fb" stroke="#2f5f9f"/><path d="M1 5L5 1H16L12 5Z" fill="#2f5f9f"/><path d="M1 5H12L16 1M12 5V16M5 1V12H16M5 12L1 16" stroke="#2f5f9f" fill="none" stroke-width="0.8"/></svg>
<svg style="position:absolute;left:5px;top:567px;" width="17" height="17" viewBox="0 0 17 17"><path d="M1 5L5 1H16V12L12 16H1Z" fill="#eef4fb" stroke="#2f5f9f"/><path d="M1 5L5 1V12L1 16Z" fill="#2f5f9f"/><path d="M1 5H12L16 1M12 5V16M5 12H16" stroke="#2f5f9f" fill="none" stroke-width="0.8"/></svg>
<svg style="position:absolute;left:5px;top:589px;" width="17" height="17" viewBox="0 0 17 17"><path d="M1 5L5 1H16V12L12 16H1Z" fill="#eef4fb" stroke="#2f5f9f"/><path d="M12 5L16 1V12L12 16Z" fill="#2f5f9f"/><path d="M1 5H12M5 1V12H12M5 12L1 16" stroke="#2f5f9f" fill="none" stroke-width="0.8"/></svg>
<svg style="position:absolute;left:5px;top:611px;" width="17" height="17" viewBox="0 0 17 17"><path d="M1 5L5 1H16V12L12 16H1Z" fill="#eef4fb" stroke="#2f5f9f"/><rect x="5" y="1" width="11" height="11" fill="#2f5f9f"/><path d="M1 5H12L16 1M12 5V16M5 12L1 16" stroke="#2f5f9f" fill="none" stroke-width="0.8"/></svg>
<svg style="position:absolute;left:5px;top:633px;" width="17" height="17" viewBox="0 0 17 17"><path d="M1 5L5 1H16V12L12 16H1Z" fill="#eef4fb" stroke="#2f5f9f"/><path d="M1 16L5 12H16L12 16Z" fill="#2f5f9f"/><path d="M1 5H12L16 1M12 5V16M5 1V12" stroke="#2f5f9f" fill="none" stroke-width="0.8"/></svg>
<svg style="position:absolute;left:5px;top:655px;" width="17" height="17" viewBox="0 0 17 17"><g stroke="#1c2f55" stroke-width="1" stroke-linejoin="round"><path d="M2,3 H11.5 L14.8,6.5 H5.5 Z" fill="#3f74b8"/><path d="M2,3 L5.5,6.5 V15.6 L2,12 Z" fill="#3567a8"/><rect x="5.5" y="6.5" width="9.3" height="9.1" fill="#4a7fc2"/></g></svg>
<svg style="position:absolute;left:5px;top:678px;" width="17" height="17" viewBox="0 0 17 17"><g stroke="#1c2f55" stroke-width="1" stroke-linejoin="round"><path d="M2,3 H11.5 L14.8,6.5 H5.5 Z" fill="#3f74b8"/><path d="M2,3 L5.5,6.5 V15.6 L2,12 Z" fill="#ffffff"/><rect x="5.5" y="6.5" width="9.3" height="9.1" fill="#4a7fc2"/></g></svg>
<svg style="position:absolute;left:5px;top:700px;" width="17" height="17" viewBox="0 0 17 17"><g stroke="#1c2f55" stroke-width="1" stroke-linejoin="round"><path d="M2,3 H11.5 L14.8,6.5 H5.5 Z" fill="#ffffff"/><path d="M2,3 L5.5,6.5 V15.6 L2,12 Z" fill="#3567a8"/><rect x="5.5" y="6.5" width="9.3" height="9.1" fill="#4a7fc2"/></g></svg>
<svg style="position:absolute;left:5px;top:722px;" width="17" height="17" viewBox="0 0 17 17"><g stroke="#1c2f55" stroke-width="1" stroke-linejoin="round"><path d="M2,3 H11.5 L14.8,6.5 H5.5 Z" fill="#ffffff"/><path d="M2,3 L5.5,6.5 V15.6 L2,12 Z" fill="#ffffff"/><rect x="5.5" y="6.5" width="9.3" height="9.1" fill="#4a7fc2"/></g></svg>
<svg style="position:absolute;left:9px;top:741px;" width="4" height="7" viewBox="0 0 4 7"><path d="M4 0V7L0 3.5Z" fill="#777"/></svg>
<svg style="position:absolute;left:5px;top:757px;" width="15" height="3" viewBox="0 0 15 3"><rect x="0" y="0" width="2" height="2" fill="#9a9a9a"/><rect x="4" y="0" width="2" height="2" fill="#9a9a9a"/><rect x="8" y="0" width="2" height="2" fill="#9a9a9a"/><rect x="12" y="0" width="2" height="2" fill="#9a9a9a"/></svg>
<svg style="position:absolute;left:5px;top:766px;" width="17" height="17" viewBox="0 0 17 17"><path d="M1 6L6 1M11 16L16 11" stroke="#222" stroke-width="1.2"/><path d="M3.5 3.5L13.5 13.5" stroke="#222"/><path d="M3 3L7 4L4 7ZM14 14L10 13L13 10Z" fill="#222"/></svg>
<svg style="position:absolute;left:5px;top:787px;" width="17" height="17" viewBox="0 0 17 17"><path d="M1 1V9M16 1V9M1 4H16" stroke="#e00" stroke-width="1.3"/><path d="M1 4L4 2V6ZM16 4L13 2V6Z" fill="#e00"/><ellipse cx="8.5" cy="11" rx="5" ry="3.5" fill="#ccc" stroke="#333" stroke-width="0.8"/><ellipse cx="8.5" cy="11" rx="3.2" ry="2.2" fill="#1060e0"/></svg>
<svg style="position:absolute;left:5px;top:809px;" width="17" height="18" viewBox="0 0 17 18"><path d="M1 1H8M1 17H8M4.5 1V17" stroke="#e00" stroke-width="1.3"/><path d="M4.5 1L2.5 4H6.5ZM4.5 17L2.5 14H6.5Z" fill="#e00"/><ellipse cx="12" cy="9" rx="4.5" ry="3.5" fill="#ccc" stroke="#333" stroke-width="0.8"/><ellipse cx="12" cy="9" rx="3" ry="2.2" fill="#1060e0"/></svg>
<svg style="position:absolute;left:5px;top:832px;" width="17" height="17" viewBox="0 0 17 17"><path d="M1 16H16M1 15L12 2" stroke="#222"/><path d="M10 5Q15 9 14 15" fill="none" stroke="#222"/><path d="M8 4H12L10 7Z" fill="#222"/></svg>
<svg style="position:absolute;left:5px;top:854px;" width="17" height="17" viewBox="0 0 17 17"><circle cx="8.5" cy="8.5" r="7.5" fill="#f4f4f4" stroke="#333"/><path d="M4 4L9 9" stroke="#333"/><path d="M3.5 3.5L7 4.5L4.5 7Z" fill="#333"/></svg>
<svg style="position:absolute;left:5px;top:876px;" width="17" height="17" viewBox="0 0 17 17"><circle cx="8.5" cy="8.5" r="7.5" fill="#f4f4f4" stroke="#333"/><path d="M4 4L13 13" stroke="#333"/><path d="M3.5 3.5L7 4.5L4.5 7ZM13.5 13.5L10 12.5L12.5 10Z" fill="#333"/></svg>
<div style="position:absolute;left:0px;top:900px;width:23px;height:1px;background:#d0d0d0"></div>
<svg style="position:absolute;left:5px;top:907px;" width="17" height="17" viewBox="0 0 17 17"><text x="9" y="8" font-size="8" font-weight="bold" fill="#1f3f8f" font-family="Liberation Sans">A</text><path d="M9 7H5V14" fill="none" stroke="#1f3f8f" stroke-width="1.5"/><path d="M3 12L5 16L7 12Z" fill="#1f3f8f"/></svg>
<svg style="position:absolute;left:8px;top:928px;" width="10" height="17" viewBox="0 0 10 17"><defs><linearGradient id="thg" x1="0" x2="1"><stop offset="0" stop-color="#222"/><stop offset="0.5" stop-color="#777"/><stop offset="1" stop-color="#222"/></linearGradient></defs><rect x="1" y="0" width="8" height="16" fill="url(#thg)"/><path d="M1 2H9M1 4H9M1 6H9" stroke="#eee" stroke-width="0.8"/></svg>
<svg style="position:absolute;left:9px;top:949px;" width="4" height="7" viewBox="0 0 4 7"><path d="M4 0V7L0 3.5Z" fill="#777"/></svg>
<div style="position:absolute;left:26px;top:207px;width:312px;height:566px;background:#e6e6e6"></div>
<div style="position:absolute;left:335px;top:207px;width:3px;height:566px;background:#dedede"></div>
<div style="position:absolute;left:30px;top:213.84px;font-size:12px;line-height:12px;color:#444;font-weight:normal;white-space:nowrap;">Scene</div>
<svg style="position:absolute;left:278px;top:216px;" width="10" height="6" viewBox="0 0 10 6"><path d="M0 0H10L5 5Z" fill="#666"/></svg>
<svg style="position:absolute;left:298px;top:213px;" width="9" height="11" viewBox="0 0 9 11"><path d="M2 1H7V6.5H8.5V8H5V11H4V8H0.5V6.5H2Z" fill="#5a5a5a"/><rect x="3.3" y="2.2" width="1.6" height="4" fill="#e5e5e5"/></svg>
<svg style="position:absolute;left:316px;top:214px;" width="10" height="10" viewBox="0 0 10 10"><path d="M1 1L9 9M9 1L1 9" stroke="#555" stroke-width="1.3"/></svg>
<div style="position:absolute;left:26px;top:232px;width:307px;height:20px;background:#ffffff"></div>
<div style="position:absolute;left:29.5px;top:234.84px;font-size:12px;line-height:12px;color:#555;font-weight:normal;white-space:nowrap;">Search ...</div>
<div style="position:absolute;left:293px;top:233px;width:18px;height:18px;background:#efebe3;border:1px solid #b8b8b8;box-sizing:border-box"></div>
<svg style="position:absolute;left:296px;top:236px;" width="12" height="12" viewBox="0 0 12 12"><path d="M1 1L11 11M11 1L1 11" stroke="#d42020" stroke-width="1.8"/></svg>
<div style="position:absolute;left:312px;top:232px;width:21px;height:20px;background:#efebde"></div>
<svg style="position:absolute;left:313px;top:233px;" width="18" height="18" viewBox="0 0 18 18"><g stroke="#f0a000" stroke-width="1"><path d="M3.5 0.5V7.5M0 4H7M1 1.5L6 6.5M6 1.5L1 6.5"/></g><circle cx="3.5" cy="4" r="1.3" fill="#f8c000"/><g fill="none" stroke="#3a78d8" stroke-width="1.1"><path d="M10 4.5L11.5 0.8L13 4.5M8 10.5L9.5 6.8L11 10.5M12 10.5L13.5 6.8L15 10.5M6 16.5L7.5 12.8L9 16.5M10 16.5L11.5 12.8L13 16.5M14 16.5L15.5 12.8L17 16.5"/></g><g fill="#3a78d8"><rect x="10" y="4" width="3" height="1.4"/><rect x="8" y="10" width="3" height="1.4"/><rect x="12" y="10" width="3" height="1.4"/><rect x="6" y="16" width="3" height="1.4"/><rect x="10" y="16" width="3" height="1.4"/><rect x="14" y="16" width="3" height="1.4"/></g></svg>
<div style="position:absolute;left:26px;top:252px;width:306px;height:498px;background:#fff;border:1px solid #858585;box-sizing:border-box"></div>
<svg style="position:absolute;left:30px;top:255px;" width="20" height="18" viewBox="0 0 20 18"><path d="M1,4.5 L2.8,3.2 L7,6.3 H10.5 L16,2.8 L17.8,4.3 L13.2,8.2 V10.2 L17.6,9.6 L17.2,11.6 L12,15.2 L9.5,16.4 L1.5,12.6 L2.5,10.8 L7.5,12.6 L6.2,8.5 Z" fill="#e80000"/><rect x="6.5" y="7.5" width="5.5" height="4.5" fill="#6a0000"/><circle cx="9.5" cy="1.3" r="0.9" fill="#111"/><circle cx="5.5" cy="3.3" r="0.9" fill="#111"/><circle cx="13.5" cy="3.3" r="0.9" fill="#111"/><circle cx="9.5" cy="5.3" r="0.9" fill="#111"/></svg>
<div style="position:absolute;left:52.3px;top:256.84px;font-size:12px;line-height:12px;color:#000;font-weight:normal;white-space:nowrap;">Scene8</div>
<svg style="position:absolute;left:35px;top:271px;" width="20" height="70" viewBox="0 0 20 70"><path d="M4.5 0V65" stroke="#888" stroke-dasharray="1 1"/><path d="M9 11.5H15" stroke="#888" stroke-dasharray="1 1"/><path d="M9 29.5H15" stroke="#888" stroke-dasharray="1 1"/><path d="M9 47.5H15" stroke="#888" stroke-dasharray="1 1"/><path d="M9 65.5H15" stroke="#888" stroke-dasharray="1 1"/></svg>
<svg style="position:absolute;left:35px;top:278px;" width="9" height="9" viewBox="0 0 9 9"><rect x="0.5" y="0.5" width="8" height="8" fill="#fff" stroke="#8f8f86"/><path d="M2 4.5H7M4.5 2V7" stroke="#2a3f7f" stroke-width="1"/></svg>
<svg style="position:absolute;left:35px;top:296px;" width="9" height="9" viewBox="0 0 9 9"><rect x="0.5" y="0.5" width="8" height="8" fill="#fff" stroke="#8f8f86"/><path d="M2 4.5H7M4.5 2V7" stroke="#2a3f7f" stroke-width="1"/></svg>
<svg style="position:absolute;left:35px;top:314px;" width="9" height="9" viewBox="0 0 9 9"><rect x="0.5" y="0.5" width="8" height="8" fill="#fff" stroke="#8f8f86"/><path d="M2 4.5H7M4.5 2V7" stroke="#2a3f7f" stroke-width="1"/></svg>
<svg style="position:absolute;left:35px;top:332px;" width="9" height="9" viewBox="0 0 9 9"><rect x="0.5" y="0.5" width="8" height="8" fill="#fff" stroke="#8f8f86"/><path d="M2 4.5H7M4.5 2V7" stroke="#2a3f7f" stroke-width="1"/></svg>
<svg style="position:absolute;left:50px;top:273px;" width="16" height="16" viewBox="0 0 16 16"><path d="M7 3V12H13M7 12L2.5 14.5" stroke="#222" stroke-width="1.8" fill="none"/><path d="M4 4.5L7 0.5L10 4.5ZM11.5 9L15.5 12L11.5 15ZM0.5 16L1 11.5L4.5 14.5Z" fill="#222"/></svg>
<svg style="position:absolute;left:50px;top:290px;" width="16" height="16" viewBox="0 0 16 16"><g stroke="#000" stroke-width="1" stroke-linejoin="round"><path d="M1,8.5 L4,6 H12 L15,3.5 V11.5 L12,15 H1 Z" fill="#2a78e0"/><path d="M1,8.5 L4,6 H12 L15,3.5 L12,8.5 Z" fill="#5aa8ff"/><path d="M12,8.5 L15,3.5 V11.5 L12,15 Z" fill="#1a58b0"/><path d="M4.5,6 V2.8 L7,0.8 H12.5 V5.5" fill="#3a88f0"/><path d="M4.5,2.8 H10 L12.5,0.8" fill="none"/><path d="M10,2.8 V6" fill="none"/></g><rect x="2.5" y="10" width="8" height="3" fill="#6ab8ff"/></svg>
<svg style="position:absolute;left:49px;top:309px;" width="17" height="16" viewBox="0 0 17 16"><circle cx="4.5" cy="3.5" r="3" fill="#fff" stroke="#111" stroke-width="1.3"/><circle cx="11" cy="3.5" r="3" fill="#fff" stroke="#111" stroke-width="1.3"/><circle cx="4.5" cy="3.5" r="1" fill="#111"/><circle cx="11" cy="3.5" r="1" fill="#111"/><rect x="0.5" y="6.5" width="13" height="9" fill="#555" stroke="#111"/><rect x="2.5" y="9.5" width="9" height="4" fill="#a0a0c0"/><path d="M14 9L16.5 8V14L14 13Z" fill="#111"/></svg>
<svg style="position:absolute;left:50px;top:327px;" width="15" height="15" viewBox="0 0 15 15"><path d="M1 2L3 0L9 7L7 9Z" fill="#3a5fbf" stroke="#123" stroke-width="0.7"/><circle cx="10" cy="11" r="4" fill="#e8e4c8"/><path d="M5 5L14 14" stroke="#e02020" stroke-width="1"/></svg>
<div style="position:absolute;left:71.6px;top:273.84px;font-size:12px;line-height:12px;color:#000;font-weight:normal;white-space:nowrap;">Global Coordinate System</div>
<div style="position:absolute;left:71.6px;top:291.84px;font-size:12px;line-height:12px;color:#000;font-weight:bold;white-space:nowrap;">Part2</div>
<div style="position:absolute;left:71.6px;top:309.84px;font-size:12px;line-height:12px;color:#000;font-weight:normal;white-space:nowrap;">Cameras</div>
<div style="position:absolute;left:71.6px;top:328.84px;font-size:12px;line-height:12px;color:#000;font-weight:normal;white-space:nowrap;">Lights</div>
<div style="position:absolute;left:27px;top:750px;width:58px;height:22px;background:#f7f7f7;border:1px solid #d8d8d8;border-top:none;box-sizing:border-box"></div>
<svg style="position:absolute;left:31px;top:752px;" width="16" height="17" viewBox="0 0 16 17"><g fill="none" stroke="#3a78d8" stroke-width="1.1"><path d="M6.5 4.5L8 0.8L9.5 4.5M4.5 10.5L6 6.8L7.5 10.5M8.5 10.5L10 6.8L11.5 10.5M1.5 16.5L3 12.8L4.5 16.5M5.5 16.5L7 12.8L8.5 16.5M9.5 16.5L11 12.8L12.5 16.5"/></g><g fill="#3a78d8"><rect x="6.5" y="4" width="3" height="1.4"/><rect x="4.5" y="10" width="3" height="1.4"/><rect x="8.5" y="10" width="3" height="1.4"/><rect x="1.5" y="16" width="3" height="1.4"/><rect x="5.5" y="16" width="3" height="1.4"/><rect x="9.5" y="16" width="3" height="1.4"/></g></svg>
<div style="position:absolute;left:48.3px;top:754.84px;font-size:12px;line-height:12px;color:#333;font-weight:normal;white-space:nowrap;">Scene</div>
<svg style="position:absolute;left:89px;top:752px;" width="17" height="17" viewBox="0 0 17 17"><circle cx="6.5" cy="6.5" r="5" fill="#cfe2f8" stroke="#555" stroke-width="1.2"/><path d="M10 10L15 15" stroke="#e0a030" stroke-width="3"/></svg>
<div style="position:absolute;left:108.5px;top:754.84px;font-size:12px;line-height:12px;color:#333;font-weight:normal;white-space:nowrap;">Search</div>
<svg style="position:absolute;left:155px;top:752px;" width="14" height="16" viewBox="0 0 14 16"><rect x="0.5" y="0.5" width="13" height="15" fill="#fff" stroke="#333"/><rect x="2.5" y="2.5" width="5" height="5" fill="#2a4f8f"/><path d="M9 3V8M11 3V8M3 12H11" stroke="#555"/></svg>
<div style="position:absolute;left:172.3px;top:754.84px;font-size:12px;line-height:12px;color:#333;font-weight:normal;white-space:nowrap;">Properties</div>
<svg style="position:absolute;left:338px;top:207px;overflow:hidden" width="1579" height="566" viewBox="338 207 1579 566"><defs>
<linearGradient id="vbg" x1="0" y1="0" x2="0" y2="1"><stop offset="0" stop-color="#393c51"/><stop offset="0.25" stop-color="#4f5265"/><stop offset="0.5" stop-color="#6a6d7e"/><stop offset="0.75" stop-color="#858795"/><stop offset="1" stop-color="#a3a3ac"/></linearGradient>
<linearGradient id="cylf" gradientUnits="userSpaceOnUse" x1="1050" y1="0" x2="1427" y2="0">
<stop offset="0" stop-color="#c4b8ae"/><stop offset="0.12" stop-color="#bcb0a6"/><stop offset="0.265" stop-color="#978b80"/><stop offset="0.4" stop-color="#93877c"/><stop offset="0.557" stop-color="#998c81"/><stop offset="0.663" stop-color="#9e9187"/><stop offset="1" stop-color="#a79a8f"/></linearGradient>
<linearGradient id="ylw" gradientUnits="userSpaceOnUse" x1="925" y1="0" x2="1084" y2="0">
<stop offset="0" stop-color="#b8b080"/><stop offset="0.1" stop-color="#b4ac7c"/><stop offset="0.3" stop-color="#a8a076"/><stop offset="0.5" stop-color="#c2ba8e"/><stop offset="0.62" stop-color="#b4ac80"/><stop offset="0.78" stop-color="#a69e72"/><stop offset="1" stop-color="#bcb486"/></linearGradient>
<linearGradient id="ylw2" gradientUnits="userSpaceOnUse" x1="935" y1="0" x2="1062" y2="0">
<stop offset="0" stop-color="#c8c480"/><stop offset="0.35" stop-color="#dcd890"/><stop offset="0.6" stop-color="#c0bc78"/><stop offset="1" stop-color="#d0cc88"/></linearGradient>
</defs>
<rect x="338" y="207" width="1579" height="566" fill="url(#vbg)"/>
<path d="M504,416 L604,359 A414.8,235.2 0 0,1 729.3,207 L1301.5,207 L1524,333 L1427,390 A414.8,235.2 0 0,1 1050,612 L944,674 Z" fill="#b5a99f"/>
<path d="M504,416 L944,674 L944,759 L504,502 Z" fill="#928579"/>
<path d="M1427,390 A414.8,235.2 0 0,1 1050,612 L944,674 L944,759 L1050,697 A414.8,235.2 0 0,0 1427,474 Z" fill="url(#cylf)"/>
<path d="M1427,390 L1524,333 L1524,417 L1427,474 Z" fill="#a89b90"/>
<g fill="none" stroke="#353535" stroke-width="1.6" stroke-linejoin="round">
<path d="M729.3,207 A414.8,235.2 0 0,0 604,359 L504,416 L944,674 L1050,612 A414.8,235.2 0 0,0 1427,390 L1524,333 L1301.5,207"/>
<path d="M504,416 V502 L944,759"/>
<path d="M1427,390 V474 L1524,417 V333"/>
<path d="M1427,474 A414.8,235.2 0 0,1 1050,697"/>
</g>
<!-- cylinder -->
<g>
<path d="M914,723 A85,49.3 0 0,1 1083.7,723 V638 H914 Z" fill="#d8d088" fill-opacity="0.12"/>
<path d="M925,662 V747.5 A85,49.3 0 0,0 1083.7,723 V638 H925 Z" fill="url(#ylw)"/>
<ellipse cx="998.8" cy="638.1" rx="85" ry="49.3" fill="#c9c293"/>
<ellipse cx="998.8" cy="637.1" rx="63.5" ry="36.6" fill="url(#ylw2)" stroke="#6a6848" stroke-width="1"/>
<path d="M937,647 A62,28 0 0,1 1061,647 A63.5,36.6 0 0,1 998.8,673.7 A63.5,36.6 0 0,1 937,647Z" fill="#d6d28e"/>
<ellipse cx="998.5" cy="655" rx="31.5" ry="18.6" fill="#cfcb80" stroke="#9a9660" stroke-width="0.6"/>
<g fill="none" stroke="#f4f27a" stroke-width="1" stroke-dasharray="4 2.5">
<ellipse cx="998.8" cy="637.1" rx="63.5" ry="36.6"/>
<path d="M937,647 A62,28 0 0,1 1061,647"/>
<ellipse cx="998.5" cy="655" rx="31.5" ry="18.6"/>
<ellipse cx="998.5" cy="725" rx="31.5" ry="18"/>
<path d="M914,723 A85,49.3 0 0,1 1083.7,723"/>
<path d="M914,723 A85,49.3 0 0,0 925,747.5"/>
<path d="M998.8,638 V724.5 L979,736 M998.8,638.6 L953.8,681.6"/>
<path d="M976.3,673.7 V736 M976,690 H1059 M936,650 V682 M954,672 V682"/>
</g>
<g fill="none" stroke="#f6f266" stroke-width="2">
<ellipse cx="998.8" cy="638.1" rx="85" ry="49.3"/>
<path d="M925,747.5 A85,49.3 0 0,0 1083.7,723"/>
<path d="M939.5,677 V757"/>
</g>
<path d="M1059.3,604 V690" stroke="#f4f060" stroke-width="1.3"/>
</g>
<!-- triball -->
<g>
<path d="M978.6,291.4 L1015,276.3 L1051.6,291.4 L1015,312.3 Z" fill="#fff" fill-opacity="0.18" stroke="#ececec" stroke-width="2"/>
<path d="M926.5,384.2 L961.8,404.4 L961.8,447 L926.5,427 Z" fill="#fff" fill-opacity="0.18" stroke="#ececec" stroke-width="2"/>
<path d="M1104.4,384.2 L1067.3,404.4 L1067.3,447 L1104.4,427 Z" fill="#fff" fill-opacity="0.18" stroke="#ececec" stroke-width="2"/>
<circle cx="1015.7" cy="374" r="100.7" fill="none" stroke="#efefef" stroke-width="2.4"/>
<path d="M1015,276 V291.4" stroke="#1010e0" stroke-width="3"/>
<path d="M926.5,425.7 L943,415.6" stroke="#e01010" stroke-width="3"/>
<path d="M1104,425.7 L1086,415.6" stroke="#10e010" stroke-width="3"/>
<path d="M1015.7,374 V353.2" stroke="#1010e0" stroke-width="2.5"/>
<path d="M1015.7,374 L996.6,384.6" stroke="#e01010" stroke-width="2.5"/>
<path d="M1015.7,374 L1033,384.6" stroke="#10e010" stroke-width="2.5"/>
<g stroke="#000" stroke-width="1.6">
<circle cx="1015" cy="271.2" r="5" fill="#c80000"/>
<circle cx="926.5" cy="425.7" r="5" fill="#c80000"/>
<circle cx="1104" cy="425.7" r="5" fill="#c80000"/>
<circle cx="1015.7" cy="374" r="5" fill="#c80000"/>
<circle cx="1015" cy="353.2" r="4.6" fill="#f0f0f0"/>
<circle cx="996.6" cy="384.6" r="4.6" fill="#f0f0f0"/>
<circle cx="1033" cy="384.6" r="4.6" fill="#f0f0f0"/>
</g>
</g>
<!-- axis triad -->
<g font-family="Liberation Sans" font-size="9">
<text x="373.5" y="715.5" fill="#0000ff">Z</text>
<text x="354" y="727.5" fill="#00e000">Y</text>
<text x="393" y="727.5" fill="#ff0000">X</text>
<path d="M375,721 L372,733 L378,733 Z" fill="#5050e0"/>
<path d="M360,729 L374,737 L368,729 Z" fill="#007a00"/>
<path d="M390,729 L376,737 L382,729 Z" fill="#a00000"/>
<circle cx="375.5" cy="737.5" r="2" fill="#fff"/>
</g></svg>
<div style="position:absolute;left:26px;top:773px;width:1891px;height:6px;background:#cdcdcd"></div>
<div style="position:absolute;left:26px;top:779px;width:1891px;height:1px;background:#ededed"></div>
<div style="position:absolute;left:26px;top:780px;width:1891px;height:25px;background:#e5e5e5"></div>
<div style="position:absolute;left:30.7px;top:784.84px;font-size:12px;line-height:12px;color:#444;font-weight:normal;white-space:nowrap;">Catalog Browser</div>
<svg style="position:absolute;left:1866px;top:788px;" width="10" height="6" viewBox="0 0 10 6"><path d="M0 0H10L5 5Z" fill="#666"/></svg>
<svg style="position:absolute;left:1886px;top:785px;" width="9" height="11" viewBox="0 0 9 11"><path d="M2 1H7V6.5H8.5V8H5V11H4V8H0.5V6.5H2Z" fill="#5a5a5a"/><rect x="3.3" y="2.2" width="1.6" height="4" fill="#e5e5e5"/></svg>
<svg style="position:absolute;left:1904px;top:786px;" width="10" height="10" viewBox="0 0 10 10"><path d="M1 1L9 9M9 1L1 9" stroke="#555" stroke-width="1.3"/></svg>
<div style="position:absolute;left:26px;top:805px;width:1891px;height:18px;background:#e1e1e1;border-top:1px solid #a8a8a8;border-bottom:1px solid #a8a8a8;box-sizing:border-box"></div>
<div style="position:absolute;left:497px;top:806px;width:3px;height:16px;background:#f2f2f2;border-left:1px solid #b8b8b8;border-right:1px solid #b8b8b8;box-sizing:border-box"></div>
<div style="position:absolute;left:272.5px;top:807.84px;font-size:12px;line-height:12px;color:#111;font-weight:normal;white-space:nowrap;transform:translateX(-50%);">New</div>
<div style="position:absolute;left:970px;top:806px;width:3px;height:16px;background:#f2f2f2;border-left:1px solid #b8b8b8;border-right:1px solid #b8b8b8;box-sizing:border-box"></div>
<div style="position:absolute;left:745px;top:807.84px;font-size:12px;line-height:12px;color:#111;font-weight:normal;white-space:nowrap;transform:translateX(-50%);">Open</div>
<div style="position:absolute;left:1443px;top:806px;width:3px;height:16px;background:#f2f2f2;border-left:1px solid #b8b8b8;border-right:1px solid #b8b8b8;box-sizing:border-box"></div>
<div style="position:absolute;left:1218px;top:807.84px;font-size:12px;line-height:12px;color:#111;font-weight:normal;white-space:nowrap;transform:translateX(-50%);">Save</div>
<div style="position:absolute;left:1917px;top:806px;width:3px;height:16px;background:#f2f2f2;border-left:1px solid #b8b8b8;border-right:1px solid #b8b8b8;box-sizing:border-box"></div>
<div style="position:absolute;left:1691px;top:807.84px;font-size:12px;line-height:12px;color:#111;font-weight:normal;white-space:nowrap;transform:translateX(-50%);">Close</div>
<svg style="position:absolute;left:33px;top:807px;" width="15" height="14" viewBox="0 0 15 14"><rect x="0.5" y="0.5" width="11" height="13" fill="#fff" stroke="#555"/><path d="M12 1V6" stroke="#555"/><rect x="3" y="3.5" width="2" height="2" fill="#555"/><rect x="7" y="3.5" width="2" height="2" fill="#555"/><rect x="3" y="8.5" width="2" height="2" fill="#555"/><rect x="7" y="8.5" width="2" height="2" fill="#555"/></svg>
<svg style="position:absolute;left:506px;top:807px;" width="16" height="15" viewBox="0 0 16 15"><path d="M0.5 0.5H9L11 2V13.5H0.5Z" fill="#fff" stroke="#555"/><path d="M3 2V14L8 12V1" fill="#ddd" stroke="#555"/><text x="11" y="14" font-size="6" fill="#333" font-family="Liberation Sans">2</text></svg>
<svg style="position:absolute;left:978px;top:807px;" width="16" height="15" viewBox="0 0 16 15"><rect x="3.5" y="0.5" width="10" height="10" fill="#fff" stroke="#555"/><rect x="0.5" y="3.5" width="10" height="10" fill="#eee" stroke="#555"/><rect x="3" y="6" width="4" height="3" fill="#555"/></svg>
<svg style="position:absolute;left:1451px;top:807px;" width="16" height="15" viewBox="0 0 16 15"><rect x="0.5" y="0.5" width="11" height="13" fill="#fff" stroke="#555"/><path d="M10 9Q14 10 13 14" fill="none" stroke="#555"/></svg>
<div style="position:absolute;left:1915px;top:806px;width:1px;height:16px;background:#a8a8a8"></div>
<div style="position:absolute;left:26px;top:823px;width:1891px;height:21px;background:#fff"></div>
<div style="position:absolute;left:27px;top:824px;width:18px;height:19px;background:#ececec;border:1px solid #d0d0d0;box-sizing:border-box"></div>
<svg style="position:absolute;left:29px;top:828px;" width="14" height="11" viewBox="0 0 14 11"><path d="M1 5.5L6 1V4H13V7H6V10Z" fill="#bdbdbd"/></svg>
<div style="position:absolute;left:49.6px;top:825.84px;font-size:12px;line-height:12px;color:#555;font-weight:normal;white-space:nowrap;">Search ...</div>
<div style="position:absolute;left:1900px;top:825px;width:17px;height:18px;background:#f0ece4;border:1px solid #c0c0c0;box-sizing:border-box"></div>
<svg style="position:absolute;left:1902px;top:827px;" width="13" height="14" viewBox="0 0 13 14"><path d="M1 1L12 13M12 1L1 13" stroke="#d42020" stroke-width="1.8"/></svg>
<div style="position:absolute;left:26px;top:844px;width:1891px;height:149px;background:#fff;border-top:1px solid #9a9a9a;border-left:1px solid #9a9a9a;border-bottom:1px solid #9a9a9a;box-sizing:border-box"></div>
<div style="position:absolute;left:65.5px;top:884.84px;font-size:12px;line-height:12px;color:#111;font-weight:normal;white-space:nowrap;transform:translateX(-50%);">Assembly</div>
<div style="position:absolute;left:65.5px;top:899.84px;font-size:12px;line-height:12px;color:#111;font-weight:normal;white-space:nowrap;transform:translateX(-50%);">Explode Tool</div>
<div style="position:absolute;left:140.5px;top:884.84px;font-size:12px;line-height:12px;color:#111;font-weight:normal;white-space:nowrap;transform:translateX(-50%);">Bearing</div>
<div style="position:absolute;left:215.5px;top:884.84px;font-size:12px;line-height:12px;color:#111;font-weight:normal;white-space:nowrap;transform:translateX(-50%);">Cold Formed</div>
<div style="position:absolute;left:215.5px;top:899.84px;font-size:12px;line-height:12px;color:#111;font-weight:normal;white-space:nowrap;transform:translateX(-50%);">Steel</div>
<div style="position:absolute;left:291px;top:884.84px;font-size:12px;line-height:12px;color:#111;font-weight:normal;white-space:nowrap;transform:translateX(-50%);">Custom Hole</div>
<div style="position:absolute;left:366px;top:884.84px;font-size:12px;line-height:12px;color:#111;font-weight:normal;white-space:nowrap;transform:translateX(-50%);">Extrude</div>
<div style="position:absolute;left:441px;top:884.84px;font-size:12px;line-height:12px;color:#111;font-weight:normal;white-space:nowrap;transform:translateX(-50%);">Fastener</div>
<div style="position:absolute;left:515.5px;top:884.84px;font-size:12px;line-height:12px;color:#111;font-weight:normal;white-space:nowrap;transform:translateX(-50%);">Gears</div>
<div style="position:absolute;left:590.5px;top:884.84px;font-size:12px;line-height:12px;color:#111;font-weight:normal;white-space:nowrap;transform:translateX(-50%);">Helix</div>
<div style="position:absolute;left:666px;top:884.84px;font-size:12px;line-height:12px;color:#111;font-weight:normal;white-space:nowrap;transform:translateX(-50%);">Hot Formed</div>
<div style="position:absolute;left:666px;top:899.84px;font-size:12px;line-height:12px;color:#111;font-weight:normal;white-space:nowrap;transform:translateX(-50%);">Steel</div>
<div style="position:absolute;left:741px;top:884.84px;font-size:12px;line-height:12px;color:#111;font-weight:normal;white-space:nowrap;transform:translateX(-50%);">Pattern</div>
<div style="position:absolute;left:815.5px;top:884.84px;font-size:12px;line-height:12px;color:#111;font-weight:normal;white-space:nowrap;transform:translateX(-50%);">ProActiveB...</div>
<div style="position:absolute;left:890.5px;top:884.84px;font-size:12px;line-height:12px;color:#111;font-weight:normal;white-space:nowrap;transform:translateX(-50%);">Rib</div>
<svg style="position:absolute;left:45px;top:845px;" width="190" height="38" viewBox="0 0 190 38"><defs><linearGradient id="mt1" x1="0" y1="0" x2="1" y2="1"><stop offset="0" stop-color="#f0f4f6"/><stop offset="0.5" stop-color="#b8c0c4"/><stop offset="1" stop-color="#e4e8ea"/></linearGradient>
<linearGradient id="mt2" x1="0" y1="0" x2="1" y2="0"><stop offset="0" stop-color="#e8eef0"/><stop offset="0.4" stop-color="#a8b4b8"/><stop offset="0.7" stop-color="#dfe6e8"/><stop offset="1" stop-color="#9aa6aa"/></linearGradient></defs>
<path d="M7,9 L12,4 L20,9 L18,14 L12,13 Z" fill="#8a8e92"/><path d="M9,13 L18,13 L24,20 L15,22 Z" fill="#e6e8ea"/>
<ellipse cx="21.5" cy="18.5" rx="6.5" ry="6" fill="#c8cdd0" stroke="#9aa0a4" stroke-width="0.8"/><ellipse cx="21.5" cy="18.5" rx="3" ry="2.8" fill="#eef0f2"/>
<path d="M23,26 L28,22 L35,24 L36,30 L31,33 L25,31 Z" fill="#8e9296" stroke="#6e7276" stroke-width="0.6"/><ellipse cx="29.5" cy="27.5" rx="2.5" ry="1.8" fill="#222"/>
<path d="M35,16 L29,9" stroke="#14b014" stroke-width="2.6"/><path d="M26.5,6 L32,8 L28,12 Z" fill="#14b014"/>
<path d="M6,24 L13,30" stroke="#14b014" stroke-width="2.6"/><path d="M16,32.5 L10,31 L14,27 Z" fill="#14b014"/>
<g transform="rotate(35 96.5 18.5)"><ellipse cx="96.5" cy="18.5" rx="11" ry="15.5" fill="#b9bfc2" stroke="#7a8084" stroke-width="1"/><ellipse cx="96.5" cy="18.5" rx="8.5" ry="12.5" fill="#e2e6e8" stroke="#9aa0a4" stroke-width="0.8"/><ellipse cx="96.5" cy="18.5" rx="5" ry="8" fill="#ffffff" stroke="#8a9094" stroke-width="1.2"/>
<circle cx="96.5" cy="7.5" r="1.2" fill="#8a6a50"/><circle cx="103" cy="12" r="1.2" fill="#333"/><circle cx="104" cy="21" r="1.2" fill="#333"/><circle cx="90" cy="25" r="1.2" fill="#8a6a50"/><circle cx="89" cy="15" r="1.2" fill="#8a6a50"/><circle cx="97" cy="29.5" r="1.2" fill="#8a6a50"/></g>
<path d="M168,13 L181,6 V26 L168,33 Z" fill="url(#mt2)" stroke="#98a4a8" stroke-width="0.6"/>
<path d="M156,12 L168,13 L181,6 L170,4.5 Z" fill="#e6ecee" stroke="#a8b4b8" stroke-width="0.6"/>
<path d="M156,12 V15 L168,16 V13 Z" fill="#b4c0c4"/>
<path d="M168,33 L181,26 L189,20 L188,24 L177,33.5 L168,35 Z" fill="#d4dcde" stroke="#a0acb0" stroke-width="0.6"/></svg>
<svg style="position:absolute;left:270px;top:845px;" width="40" height="38" viewBox="0 0 40 38"><defs><linearGradient id="chg" x1="0" x2="1"><stop offset="0" stop-color="#c8d4d0"/><stop offset="0.4" stop-color="#f4f8f6"/><stop offset="0.7" stop-color="#b0bcb8"/><stop offset="1" stop-color="#e0e8e4"/></linearGradient></defs><path d="M14.5,13 H30 L27,32 Q22,35 18,32 Z" fill="url(#chg)"/><path d="M5,10.5 L19,4 H36 L29,11.5 Z" fill="#1d2040"/><path d="M5,10.5 V13.5 H29 L36,6.5 V4 L29,11.5 Z" fill="#101228"/><ellipse cx="20" cy="8" rx="7" ry="2.8" fill="#e8f0ee"/></svg>
<svg style="position:absolute;left:349px;top:848px;" width="33" height="32" viewBox="0 0 33 32"><path d="M2 4L10 1H32L24 4Z" fill="#c7d3cf"/><path d="M2 4H24V22H2Z" fill="#eef2f0" stroke="#dde" stroke-width="0.5"/><path d="M2 26L9 20H32L25 26Z" fill="none" stroke="#2f6fb0"/><path d="M16 26V12" stroke="#18b018" stroke-width="3"/><path d="M11 14L16 6L21 14Z" fill="#18b018"/></svg>
<svg style="position:absolute;left:424px;top:848px;" width="32" height="32" viewBox="0 0 32 32"><rect x="3" y="1" width="9" height="5" fill="#9ca2a5"/><rect x="5" y="6" width="5" height="12" fill="#c8cccd"/><rect x="5" y="18" width="5" height="13" fill="#3a3f42"/><ellipse cx="24" cy="6" rx="6" ry="4" fill="#222"/><ellipse cx="24" cy="6" rx="2.5" ry="1.5" fill="#fff"/><path d="M18 21L21 15H28L31 21L28 27H21Z" fill="#aeb7c2" stroke="#555" stroke-width="0.8"/><circle cx="24.5" cy="21" r="3" fill="#fff" stroke="#555"/></svg>
<svg style="position:absolute;left:500px;top:848px;" width="31" height="31" viewBox="0 0 31 31"><path d="M30.5,15.5 L26.1,18.3 L28.5,23.0 L23.3,23.3 L23.0,28.5 L18.3,26.1 L15.5,30.5 L12.7,26.1 L8.0,28.5 L7.7,23.3 L2.5,23.0 L4.9,18.3 L0.5,15.5 L4.9,12.7 L2.5,8.0 L7.7,7.7 L8.0,2.5 L12.7,4.9 L15.5,0.5 L18.3,4.9 L23.0,2.5 L23.3,7.7 L28.5,8.0 L26.1,12.7 Z" fill="#b6bcbe" stroke="#7c8386" stroke-width="0.8"/><circle cx="15.5" cy="15.5" r="6" fill="#fff" stroke="#666" stroke-width="1.2"/></svg>
<svg style="position:absolute;left:575px;top:847px;" width="33" height="33" viewBox="0 0 33 33"><g fill="none" stroke="#8e9aa0" stroke-width="3.4"><ellipse cx="15" cy="6" rx="12" ry="4.5" transform="rotate(-12 15 6)"/><ellipse cx="17" cy="15.5" rx="12" ry="4.5" transform="rotate(-12 17 15.5)"/><ellipse cx="18" cy="25" rx="12" ry="4.5" transform="rotate(-12 18 25)"/></g><g fill="none" stroke="#eef3f5" stroke-width="1.4"><ellipse cx="15" cy="6" rx="12" ry="4.5" transform="rotate(-12 15 6)"/><ellipse cx="17" cy="15.5" rx="12" ry="4.5" transform="rotate(-12 17 15.5)"/><ellipse cx="18" cy="25" rx="12" ry="4.5" transform="rotate(-12 18 25)"/></g><path d="M9 11Q16 9 26 10M11 20Q18 18 28 19" stroke="#333" stroke-width="1.2" fill="none"/></svg>
<svg style="position:absolute;left:648px;top:846px;" width="36" height="36" viewBox="0 0 36 36"><g stroke="#a8b0ac" stroke-width="0.6" stroke-linejoin="round"><path d="M2,6 L6,2 H36 L31,6 Z" fill="#e4e8e6"/><path d="M2,6 H31 V10 H2 Z" fill="#c8cecb"/><path d="M31,6 L36,2 V6 L31,10 Z" fill="#b4bcb8"/><path d="M13,10 H20 V27 H13 Z" fill="#dfe4e1"/><path d="M20,10 L24,7 V24 L20,27 Z" fill="#c0c8c4"/><path d="M4,27 H13 V27 H20 L24,24 H33 L29,28 V34 H4 Z" fill="#e8ecea"/><path d="M4,28 H29 V34 H4 Z" fill="#d4dad7"/><path d="M29,28 L33,24 V30 L29,34 Z" fill="#bcc4c0"/></g></svg>
<svg style="position:absolute;left:725px;top:848px;" width="31" height="31" viewBox="0 0 31 31"><rect x="1" y="1" width="12" height="13" fill="#c8cfcc" stroke="#aaa" stroke-width="0.5"/><rect x="16" y="1" width="12" height="13" fill="#e8ebe0"/><rect x="1" y="17" width="12" height="13" fill="#e2e6e3" stroke="#aaa" stroke-width="0.5"/><path d="M1 16H13" stroke="#333" stroke-width="1.5"/><path d="M18 18L25 25" stroke="#18a018" stroke-width="3"/><path d="M20 27H28V19Z" fill="#18a018"/></svg>
<svg style="position:absolute;left:800px;top:848px;" width="32" height="32" viewBox="0 0 32 32"><rect x="0.5" y="0.5" width="31" height="31" fill="#fff" stroke="#9aa"/><rect x="1" y="1" width="30" height="3" fill="#dde"/><path d="M3 7H12M3 10H9M3 13H11M3 16H8M4 19H10" stroke="#888" stroke-width="0.8"/><path d="M4 8V24" stroke="#c44" stroke-width="0.8"/><rect x="14" y="6" width="16" height="20" fill="#f4f4f4" stroke="#aaa" stroke-width="0.5"/><path d="M14 10H30M14 14H30M14 18H30M14 22H30M20 6V26" stroke="#bbb" stroke-width="0.5"/><rect x="1" y="26" width="30" height="5" fill="#dde"/></svg>
<svg style="position:absolute;left:875px;top:848px;" width="31" height="32" viewBox="0 0 31 32"><path d="M3 14L20 8L30 12L30 24L13 30L3 26Z" fill="#e4e8e2"/><path d="M3 14L13 18V30L3 26Z" fill="#cfd6cf"/><path d="M2 14L10 8L10 11L16 9L16 13L10 15L10 18Z" fill="#14a014"/><path d="M30 4L22 10L22 7L16 9L16 5L22 3L22 0Z" fill="#14a014"/></svg>
<div style="position:absolute;left:26px;top:992px;width:1891px;height:25px;background:#e5e5e5"></div>
<div style="position:absolute;left:318px;top:992px;width:39px;height:24px;background:#fafafa;border:1px solid #c8c8c8;border-top:none;box-sizing:border-box"></div>
<div style="position:absolute;left:32px;top:997.84px;font-size:12px;line-height:12px;color:#333;font-weight:normal;white-space:nowrap;">Starter</div>
<div style="position:absolute;left:79.4px;top:997.84px;font-size:12px;line-height:12px;color:#333;font-weight:normal;white-space:nowrap;">Shapes</div>
<div style="position:absolute;left:129.4px;top:997.84px;font-size:12px;line-height:12px;color:#333;font-weight:normal;white-space:nowrap;">Advshaps</div>
<div style="position:absolute;left:193.3px;top:997.84px;font-size:12px;line-height:12px;color:#333;font-weight:normal;white-space:nowrap;">FlexShapes</div>
<div style="position:absolute;left:264px;top:997.84px;font-size:12px;line-height:12px;color:#333;font-weight:normal;white-space:nowrap;">SheetMtl</div>
<div style="position:absolute;left:324.7px;top:996.84px;font-size:12px;line-height:12px;color:#333;font-weight:normal;white-space:nowrap;">Tools</div>
<div style="position:absolute;left:365px;top:997.84px;font-size:12px;line-height:12px;color:#333;font-weight:normal;white-space:nowrap;">Materials</div>
<div style="position:absolute;left:426px;top:997.84px;font-size:12px;line-height:12px;color:#333;font-weight:normal;white-space:nowrap;">Animatn</div>
<div style="position:absolute;left:485px;top:997.84px;font-size:12px;line-height:12px;color:#333;font-weight:normal;white-space:nowrap;">Surfaces</div>
<div style="position:absolute;left:542.6px;top:997.84px;font-size:12px;line-height:12px;color:#333;font-weight:normal;white-space:nowrap;">Textures</div>
<div style="position:absolute;left:599px;top:997.84px;font-size:12px;line-height:12px;color:#333;font-weight:normal;white-space:nowrap;">Bumps</div>
<div style="position:absolute;left:649px;top:997.84px;font-size:12px;line-height:12px;color:#333;font-weight:normal;white-space:nowrap;">Colors</div>
<div style="position:absolute;left:696px;top:997.84px;font-size:12px;line-height:12px;color:#333;font-weight:normal;white-space:nowrap;">Steel Frames</div>
<div style="position:absolute;left:775.5px;top:997.84px;font-size:12px;line-height:12px;color:#333;font-weight:normal;white-space:nowrap;">Tank</div>
<div style="position:absolute;left:813px;top:997.84px;font-size:12px;line-height:12px;color:#333;font-weight:normal;white-space:nowrap;">inovate test</div>
<svg style="position:absolute;left:1905px;top:1002px;" width="10" height="6" viewBox="0 0 10 6"><path d="M0 0H10L5 5Z" fill="#666"/></svg>
<div style="position:absolute;left:0px;top:1016px;width:1917px;height:1px;background:#a8a8a8"></div>
<div style="position:absolute;left:0px;top:1017px;width:1917px;height:7px;background:#f0f0f0"></div>
<div style="position:absolute;left:1153px;top:1021.84px;font-size:12px;line-height:12px;color:#222;font-weight:normal;white-space:nowrap;">View size: 1584 x 566&nbsp;&nbsp;&nbsp;&nbsp;&nbsp;Units: mm</div>
<svg style="position:absolute;left:1380px;top:1018px;" width="340" height="6" viewBox="0 0 340 6"><circle cx="7" cy="7" r="5.5" fill="none" stroke="#333" stroke-width="1.2"/><circle cx="35" cy="7" r="5.5" fill="none" stroke="#333" stroke-width="1.2"/>
<rect x="65" y="3" width="10" height="4" fill="#222"/><rect x="102" y="2" width="14" height="5" fill="#8ab4e8" stroke="#4a7ac0"/><path d="M135 7L140 2L145 7Z" fill="#333"/>
<rect x="168" y="0" width="24" height="6" fill="#d0d0d0"/><path d="M175 7L180 2L185 7" fill="#333"/><path d="M200 6L204 2" stroke="#333"/><rect x="225" y="2" width="14" height="5" fill="#444"/><path d="M262 7Q266 0 270 4" stroke="#1a4fa0" stroke-width="2" fill="none"/><path d="M290 5H300" stroke="#aaa" stroke-width="2"/><path d="M322 7L326 2" stroke="#222" stroke-width="1.5"/></svg>
<div style="position:absolute;left:1740px;top:1019px;width:118px;height:5px;background:#fafafa;border:1px solid #b0b0b0;border-bottom:none;box-sizing:border-box"></div>
<div style="position:absolute;left:1862px;top:1019px;width:40px;height:5px;background:#fafafa;border:1px solid #b0b0b0;border-bottom:none;box-sizing:border-box"></div>
<svg style="position:absolute;left:1905px;top:1019px;" width="12" height="5" viewBox="0 0 12 5"><rect x="0" y="1" width="6" height="4" fill="#c02020"/><rect x="6" y="1" width="5" height="4" fill="#2040c0"/></svg>
</body></html>
